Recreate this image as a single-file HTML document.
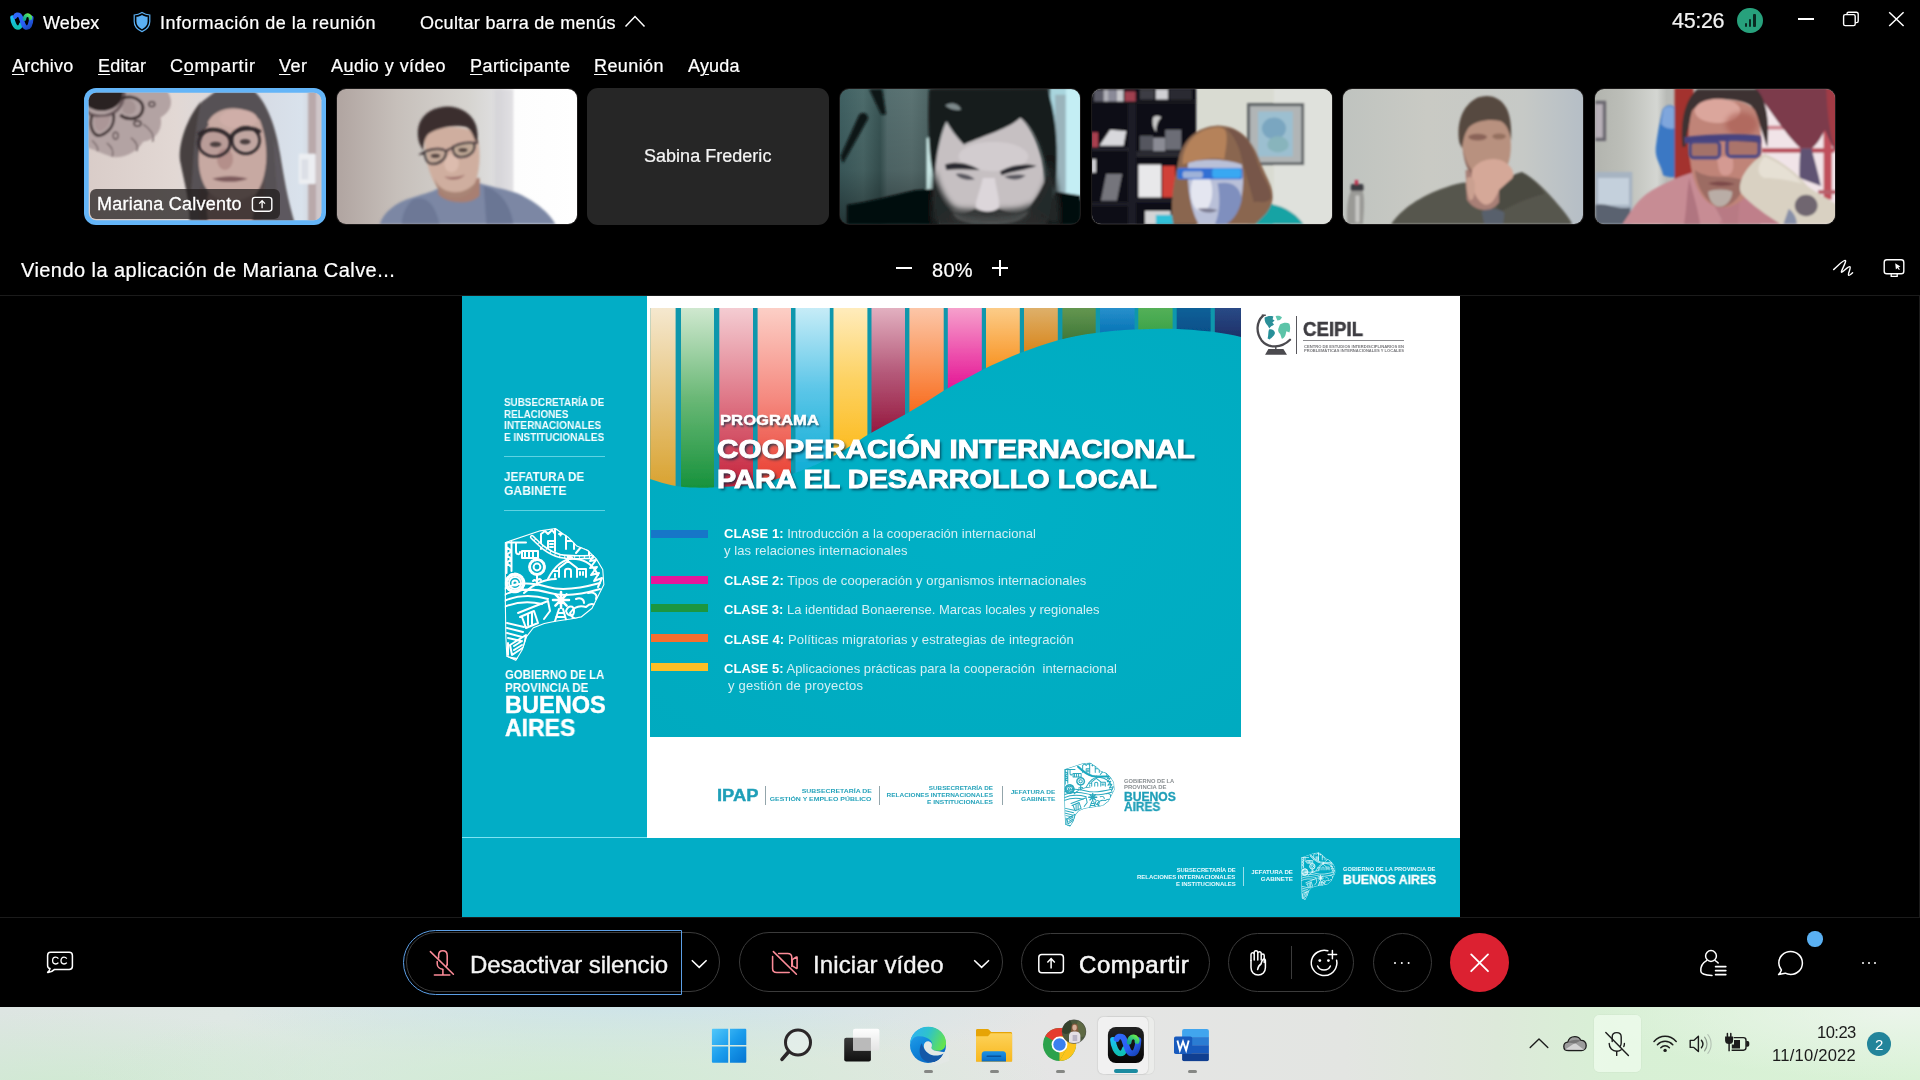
<!DOCTYPE html>
<html><head><meta charset="utf-8"><title>Webex</title>
<style>
*{box-sizing:border-box;margin:0;padding:0}
html,body{width:1920px;height:1080px;overflow:hidden;background:#000}
body{position:relative;font-family:"Liberation Sans",sans-serif;color:#fff}
.a{position:absolute}
.t{position:absolute;white-space:pre;font-family:"Liberation Sans",sans-serif;will-change:transform}
.b{font-weight:bold}
.w{-webkit-text-stroke:.22px}
svg{position:absolute;overflow:visible}
u{text-decoration:underline;text-underline-offset:2px;text-decoration-thickness:1px}
</style></head><body>
<!-- ===== title bar ===== -->
<svg width="0" height="0" style="position:absolute"><defs>
<linearGradient id="wxa" x1="0" y1="0" x2="0" y2="1"><stop offset="0" stop-color="#1cc0f4"></stop><stop offset="1" stop-color="#0fbfb4"></stop></linearGradient>
<linearGradient id="wxb" x1="0" y1="0" x2="1" y2="1"><stop offset="0" stop-color="#2f68fa"></stop><stop offset=".6" stop-color="#2a60f4"></stop><stop offset="1" stop-color="#1644b8"></stop></linearGradient>
<linearGradient id="wxc" x1="0" y1="1" x2="1" y2="0"><stop offset="0" stop-color="#14a494"></stop><stop offset=".5" stop-color="#30c880"></stop><stop offset="1" stop-color="#66ea4e"></stop></linearGradient>
<symbol id="wx" viewBox="140 250 790 570"><g fill="none" stroke-linecap="round">
<path d="M215 410 C225 560 300 745 400 745 C450 745 485 700 505 630" stroke="url(#wxa)" stroke-width="140"></path>
<path d="M305 385 C335 320 405 305 455 345 C535 415 545 745 690 745 C790 745 830 560 838 420" stroke="url(#wxb)" stroke-width="146"></path>
<path d="M612 470 C612 385 665 330 722 336 C782 344 815 400 806 448" stroke="url(#wxc)" stroke-width="118"></path>
</g></symbol></defs></svg>
<svg class="a" style="left:9.6px;top:11.6px" width="24.2" height="18.4"><use href="#wx"></use></svg>
<span class="t w" style="font-size: 18px; line-height: 18px; letter-spacing: 0.149px; left: 42.5px; top: 13.66px;">Webex</span>
<svg class="a" style="left:132px;top:10px" width="20" height="24" viewBox="132 10 20 24">
<path d="M142 12.4 C139.5 14 137 14.8 134.2 15 V21.5 C134.2 26.2 137.4 29.6 142 31.6 C146.6 29.6 149.8 26.2 149.8 21.5 V15 C147 14.8 144.5 14 142 12.4 Z" fill="none" stroke="#5bb0f4" stroke-width="1.2"></path>
<path d="M142 14.9 C140.2 16 138.4 16.6 136.4 16.8 V21.5 C136.4 25 138.6 27.6 142 29.2 C145.4 27.6 147.6 25 147.6 21.5 V16.8 C145.6 16.6 143.8 16 142 14.9 Z" fill="#5bb0f4"></path>
</svg>
<span class="t w" style="font-size: 18px; line-height: 18px; letter-spacing: 0.516px; left: 160px; top: 13.66px;">Información de la reunión</span>
<span class="t w" style="font-size: 18px; line-height: 18px; letter-spacing: 0.305px; left: 420px; top: 13.66px;">Ocultar barra de menús</span>
<svg class="a" style="left:624px;top:14px" width="22" height="14" viewBox="624 14 22 14"><path d="M625.5 26.5 L635 16.6 L644.5 26.5" fill="none" stroke="#fff" stroke-width="1.5"></path></svg>
<span class="t w" style="color: rgb(242, 242, 242); font-size: 21.5px; line-height: 21.5px; letter-spacing: -0.328px; left: 1671.5px; top: 10.7px;">45:26</span>
<div class="a" style="left:1737.2px;top:7.8px;width:25.6px;height:25.6px;border-radius:50%;background:#27a17c"></div>
<div class="a" style="left:1744.6px;top:23px;width:2.2px;height:4.4px;background:#0a2a22;border-radius:1px"></div>
<div class="a" style="left:1749px;top:18.6px;width:2.2px;height:8.8px;background:#0a2a22;border-radius:1px"></div>
<div class="a" style="left:1753.4px;top:13.6px;width:2.2px;height:13.8px;background:#0a2a22;border-radius:1px"></div>
<div class="a" style="left:1798px;top:18px;width:15.6px;height:1.5px;background:#fff"></div>
<svg class="a" style="left:1842px;top:10px" width="18" height="18" viewBox="1842 10 18 18"><rect x="1843.6" y="14.6" width="11.6" height="11" rx="1.6" fill="none" stroke="#fff" stroke-width="1.4"></rect><path d="M1847 14.4 V13.8 C1847 12.8 1847.8 12.2 1848.6 12.2 H1856.2 C1857.4 12.2 1858.2 13 1858.2 14.2 V21 C1858.2 22 1857.4 22.6 1856.6 22.6 H1855.4" fill="none" stroke="#fff" stroke-width="1.4"></path></svg>
<svg class="a" style="left:1888px;top:11px" width="17" height="16" viewBox="1888 11 17 16"><path d="M1889.2 12.2 L1903.6 26 M1903.6 12.2 L1889.2 26" fill="none" stroke="#fff" stroke-width="1.5"></path></svg>
<!-- ===== menu bar ===== -->
<span class="t w" style="font-size: 18px; line-height: 18px; letter-spacing: 0.195px; left: 12.3px; top: 57.36px;"><u>A</u>rchivo</span>
<span class="t w" style="font-size: 18px; line-height: 18px; letter-spacing: 0.194px; left: 98px; top: 57.36px;"><u>E</u>ditar</span>
<span class="t w" style="font-size: 18px; line-height: 18px; letter-spacing: 0.746px; left: 170px; top: 57.36px;">C<u>o</u>mpartir</span>
<span class="t w" style="font-size: 18px; line-height: 18px; letter-spacing: 0.484px; left: 279px; top: 57.36px;"><u>V</u>er</span>
<span class="t w" style="font-size: 18px; line-height: 18px; letter-spacing: 0.451px; left: 331px; top: 57.36px;">A<u>u</u>dio y vídeo</span>
<span class="t w" style="font-size: 18px; line-height: 18px; letter-spacing: 0.447px; left: 470px; top: 57.36px;"><u>P</u>articipante</span>
<span class="t w" style="font-size: 18px; line-height: 18px; letter-spacing: 0.406px; left: 594px; top: 57.36px;"><u>R</u>eunión</span>
<span class="t w" style="font-size: 18px; line-height: 18px; letter-spacing: 0.191px; left: 688px; top: 57.36px;">A<u>y</u>uda</span>
<!-- ===== share toolbar row ===== -->
<span class="t w" style="font-size: 20px; line-height: 20px; letter-spacing: 0.441px; left: 21.3px; top: 260.07px;">Viendo la aplicación de Mariana Calve...</span>
<div class="a" style="left:896px;top:267.2px;width:16px;height:1.5px;background:#fff"></div>
<span class="t w" style="font-size: 20px; line-height: 20px; letter-spacing: 0.284px; left: 931.8px; top: 259.67px;">80%</span>
<div class="a" style="left:992px;top:267.2px;width:16px;height:1.5px;background:#fff"></div>
<div class="a" style="left:999.2px;top:260px;width:1.5px;height:16px;background:#fff"></div>
<svg class="a" style="left:1830px;top:256px" width="26" height="24" viewBox="1830 256 26 24"><path d="M1833.6 269.6 C1838 266 1842.5 260.6 1845 260.4 C1847.6 260.2 1841 270.6 1841.4 272 C1841.9 273.4 1848.6 265.6 1850 266.8 C1851.2 267.9 1847.4 274.4 1848.6 275.2 C1849.6 275.8 1851.4 274 1852.6 272.8" fill="none" stroke="#fff" stroke-width="1.4" stroke-linecap="round" stroke-linejoin="round"></path></svg>
<svg class="a" style="left:1880px;top:256px" width="28" height="24" viewBox="1880 256 28 24"><rect x="1884.2" y="259.8" width="19.6" height="14" rx="2.6" fill="none" stroke="#fff" stroke-width="1.4"></rect><path d="M1891.2 274 V276.4 H1897.2 V274" fill="none" stroke="#fff" stroke-width="1.3"></path><path d="M1895.2 263.2 L1895.9 269.6 L1897.4 268 L1899 270 L1899.9 269.3 L1898.4 267.4 L1900.4 266.6 Z" fill="#fff"></path></svg>
<!-- content frame border -->
<div class="a" style="left:0;top:295px;width:1920px;height:623px;border:1px solid #1b1b1b;border-left:none"></div>
<!-- ===== video tiles ===== -->
<svg width="0" height="0" style="position:absolute"><defs>
<filter id="bl1" x="-20%" y="-25%" width="140%" height="150%"><feGaussianBlur stdDeviation="9"></feGaussianBlur></filter>
<filter id="bl2" x="-10%" y="-10%" width="120%" height="120%"><feGaussianBlur stdDeviation="18"></feGaussianBlur></filter>
<filter id="bl3" x="-20%" y="-20%" width="140%" height="140%"><feGaussianBlur stdDeviation="32"></feGaussianBlur></filter>
</defs></svg>

<!-- tile 1 : Mariana (active speaker) -->
<div class="a" style="left:84px;top:88px;width:242px;height:137px;border-radius:12px;background:#64b5f8"></div>
<svg class="a" style="left:84px;top:88px;border-radius:12px" width="242" height="137" viewBox="0 0 242 137">
<defs><clipPath id="c1"><rect x="4.7" y="4.7" width="232.6" height="127.6" rx="7.5"></rect></clipPath>
<linearGradient id="t1bg" x1="0" x2="1" y1="0" y2="0"><stop offset="0" stop-color="#d9ccc8"></stop><stop offset=".38" stop-color="#e2d8d4"></stop><stop offset=".72" stop-color="#d6dbe4"></stop><stop offset=".9" stop-color="#d9e2ec"></stop><stop offset="1" stop-color="#c9c4c8"></stop></linearGradient></defs>
<g clip-path="url(#c1)"><rect width="242" height="137" fill="url(#t1bg)"></rect>
<g transform="translate(-4,-4) scale(0.13426)"><g filter="url(#bl1)">
 <!-- mandala -->
 <path d="M40 40 H640 C700 120 690 200 600 250 C620 340 560 420 470 430 C420 520 300 560 230 540 C160 520 90 480 40 470 Z" fill="#b3a3a3"></path>
 <path d="M40 40 H330 C330 130 260 200 170 200 C110 200 70 180 40 150 Z" fill="#2b2022"></path>
 <path d="M330 60 C330 170 250 240 150 240 C100 240 70 225 45 200" fill="none" stroke="#6d5c5e" stroke-width="26"></path>
 <path d="M300 110 C420 60 520 160 440 240 C400 270 330 260 300 230" fill="none" stroke="#3b2d2f" stroke-width="22"></path>
 <path d="M90 230 C60 330 110 400 160 380 C230 350 260 290 250 220" fill="none" stroke="#3b2d2f" stroke-width="20"></path>
 <path d="M330 120 C400 100 440 170 400 215 C370 240 330 225 315 200 Z" fill="#a59393"></path>
 <path d="M110 250 C95 320 130 365 160 350 C205 330 225 285 225 240 Z" fill="#ab9697"></path>
 <ellipse cx="428" cy="295" rx="26" ry="20" fill="none" stroke="#4a3a3c" stroke-width="12"></ellipse>
 <ellipse cx="535" cy="150" rx="22" ry="18" fill="none" stroke="#4a3a3c" stroke-width="11"></ellipse>
 <ellipse cx="265" cy="385" rx="18" ry="26" fill="none" stroke="#5a4a4c" stroke-width="10"></ellipse>
 <path d="M470 300 C520 330 560 380 540 430 M380 400 C420 430 440 470 420 500 M200 440 C240 470 250 510 240 540 M90 420 C120 450 140 480 130 500" fill="none" stroke="#6a5a5c" stroke-width="9"></path>
 <!-- right door frame + switch -->
 <rect x="1700" y="40" width="60" height="1000" fill="#b9a9aa"></rect>
 <rect x="1760" y="40" width="70" height="1000" fill="#cfc6c8"></rect>
 <rect x="1630" y="520" width="125" height="225" rx="10" fill="#eceef2"></rect>
 <rect x="1650" y="560" width="50" height="150" fill="#dcdfe6"></rect>
 <!-- hair -->
 <path d="M1010 55 H1300 C1400 150 1460 330 1490 520 C1520 700 1545 860 1600 1040 H815 C820 900 790 780 748 570 C735 440 810 250 910 130 Z" fill="#575154"></path>
 <path d="M900 130 C800 250 730 440 745 570 C770 700 800 800 812 900 C850 700 830 450 900 130 Z" fill="#46403f"></path>
 <path d="M1440 400 C1500 560 1520 800 1590 1040 H1480 C1470 800 1450 600 1440 400 Z" fill="#5d595e"></path>
 <!-- face -->
 <path d="M950 290 C1000 170 1210 130 1340 270 C1400 420 1400 600 1360 720 C1320 840 1240 900 1150 900 C1040 900 920 820 890 640 C870 520 900 400 960 300 Z" fill="#c7a9a2"></path>
 <ellipse cx="1180" cy="260" rx="140" ry="70" fill="#cfaea8"></ellipse>
 <ellipse cx="1080" cy="560" rx="60" ry="80" fill="#b48f8a"></ellipse>
 <path d="M985 705 C1060 680 1180 680 1250 705 C1180 735 1060 738 985 705 Z" fill="#7d5a5c"></path>
 <path d="M900 760 C960 860 1080 930 1200 900 C1290 880 1340 800 1370 700 C1380 850 1360 960 1340 1040 H900 C880 940 880 840 900 760 Z" fill="#5a4c4c"></path>
 <path d="M960 800 C1020 880 1180 900 1290 820 C1300 900 1290 980 1280 1040 H960 C940 960 940 870 960 800 Z" fill="#a98984"></path>
 </g>
 <!-- glasses (sharper) -->
 <g filter="url(#bl1)" fill="none" stroke="#2f2729">
 <ellipse cx="1000" cy="440" rx="118" ry="100" stroke-width="20" fill="rgba(110,90,92,.16)"></ellipse>
 <ellipse cx="1235" cy="420" rx="102" ry="98" stroke-width="20" fill="rgba(150,140,150,.14)"></ellipse>
 <path d="M880 380 C960 320 1060 330 1120 400 C1160 330 1280 310 1345 360" stroke-width="28"></path>
 <ellipse cx="1010" cy="450" rx="42" ry="20" fill="#4a3c3e" stroke="none"></ellipse><ellipse cx="1230" cy="430" rx="40" ry="20" fill="#4a3c3e" stroke="none"></ellipse>
 </g>
</g></g>
</svg>
<div class="a" style="left:90px;top:189.4px;width:190px;height:29.8px;border-radius:6px;background:rgba(34,30,30,.74)"></div>
<span class="t" style="-webkit-text-stroke: 0.3px rgb(255, 255, 255); font-size: 18px; line-height: 18px; letter-spacing: 0.221px; left: 97.3px; top: 195.46px;">Mariana Calvento</span>
<svg class="a" style="left:250px;top:195px" width="24" height="18" viewBox="250 195 24 18"><rect x="252.4" y="197.4" width="19.4" height="13.8" rx="2.6" fill="none" stroke="#fff" stroke-width="1.4"></rect><path d="M262.1 208.2 V200.8 M259.2 203.6 L262.1 200.6 L265 203.6" fill="none" stroke="#fff" stroke-width="1.3"></path></svg>

<!-- tile 2 -->
<svg class="a" style="left:336px;top:88px" width="242" height="137" viewBox="0 0 242 137">
<defs><clipPath id="c2"><rect x="1" y="1" width="240" height="135" rx="9"></rect></clipPath>
<linearGradient id="t2bg" x1="0" x2="1" y1="0" y2="0"><stop offset="0" stop-color="#b0a4a0"></stop><stop offset=".25" stop-color="#c6bfba"></stop><stop offset=".55" stop-color="#d6d4d0"></stop><stop offset=".68" stop-color="#e0e0e2"></stop><stop offset=".74" stop-color="#fdfdfd"></stop><stop offset="1" stop-color="#ffffff"></stop></linearGradient></defs>
<rect width="242" height="137" rx="10" fill="#1c1a1a"></rect>
<g clip-path="url(#c2)"><rect width="242" height="137" fill="url(#t2bg)"></rect>
<g transform="translate(-4,-4) scale(0.13426)"><g filter="url(#bl1)">
 <rect x="1210" y="40" width="140" height="760" fill="#d2d0d6" opacity=".6"></rect>
 <!-- shirt -->
 <path d="M355 1045 C380 960 470 880 600 845 C700 815 760 800 800 770 L1100 740 C1160 760 1280 780 1370 810 C1500 860 1620 960 1665 1045 Z" fill="#7b87a4"></path>
 <path d="M600 860 C700 830 760 880 800 1045 H520 C520 960 560 900 600 860 Z" fill="#6d7896"></path>
 <path d="M1130 760 C1250 790 1330 900 1350 1045 H1150 Z" fill="#6b7694"></path>
 <!-- neck -->
 <path d="M790 700 H1100 V830 C1040 900 860 900 790 820 Z" fill="#a87f72"></path>
 <!-- face -->
 <path d="M690 400 C700 300 1060 290 1085 400 C1110 520 1100 660 1060 750 C1010 840 880 860 810 800 C730 720 690 560 690 400 Z" fill="#cfae9f"></path>
 <ellipse cx="890" cy="590" rx="55" ry="70" fill="#dcbcae"></ellipse>
 <path d="M760 700 C800 820 980 850 1070 730 C1060 800 1000 860 900 850 C820 840 780 790 760 700 Z" fill="#a88474"></path>
 <path d="M835 690 C880 700 950 695 990 675 C960 715 880 725 835 690 Z" fill="#9a6a66"></path>
 <!-- hair -->
 <path d="M650 440 C610 300 680 200 800 175 C920 150 1030 200 1070 300 C1090 360 1085 420 1080 450 C1050 380 1040 340 1000 320 C900 300 780 330 720 370 C690 400 680 440 680 500 Z" fill="#3a2e2e"></path>
 </g>
 <g filter="url(#bl1)" fill="none" stroke="#3a3034" stroke-width="13">
 <path d="M665 520 L700 500 C760 480 820 480 850 500 C850 560 800 600 740 595 C710 590 695 560 690 520 Z" fill="rgba(120,130,110,.15)"></path>
 <path d="M900 470 C950 440 1020 430 1060 440 C1070 500 1030 540 960 545 C920 545 900 520 900 470 Z" fill="rgba(120,140,110,.18)"></path>
 <path d="M850 500 C870 485 885 480 900 475 M1060 440 L1085 432"></path>
 <ellipse cx="770" cy="535" rx="34" ry="14" fill="#4a3a38" stroke="none"></ellipse><ellipse cx="975" cy="492" rx="34" ry="14" fill="#4a3a38" stroke="none"></ellipse>
 </g>
</g></g>
</svg>

<!-- tile 3 : no video -->
<div class="a" style="left:587px;top:88px;width:242px;height:137px;border-radius:11px;background:#262626"></div>
<span class="t w" style="color: rgb(245, 245, 245); font-size: 18px; line-height: 18px; letter-spacing: 0.023px; left: 644.3px; top: 146.56px;">Sabina Frederic</span>

<!-- tile 4 : bearded man -->
<svg class="a" style="left:839px;top:88px" width="242" height="137" viewBox="0 0 242 137">
<defs><clipPath id="c4"><rect x="1" y="1" width="240" height="135" rx="9"></rect></clipPath>
<linearGradient id="t4bg" x1="0" x2="1" y1="0" y2="0"><stop offset="0" stop-color="#3f6062"></stop><stop offset=".1" stop-color="#4d6c6c"></stop><stop offset=".17" stop-color="#3a5656"></stop><stop offset=".2" stop-color="#566f70"></stop><stop offset=".3" stop-color="#5c7474"></stop><stop offset=".37" stop-color="#4f6666"></stop><stop offset=".4" stop-color="#3c4c4c"></stop><stop offset="1" stop-color="#2a3434"></stop></linearGradient>
<linearGradient id="t4v" x1="0" x2="0" y1="0" y2="1"><stop offset="0" stop-color="#000" stop-opacity=".0"></stop><stop offset=".6" stop-color="#000" stop-opacity=".12"></stop><stop offset="1" stop-color="#000" stop-opacity=".45"></stop></linearGradient></defs>
<rect width="242" height="137" rx="10" fill="#1c1a1a"></rect>
<g clip-path="url(#c4)"><rect width="242" height="137" fill="url(#t4bg)"></rect><rect width="100" height="137" fill="url(#t4v)"></rect>
<g transform="translate(-4,-4) scale(0.13426)"><g filter="url(#bl1)">
 <!-- right light strip -->
 <rect x="1600" y="30" width="240" height="830" fill="#a9d5de"></rect>
 <rect x="1640" y="80" width="80" height="760" fill="#9ab4bc"></rect>
 <rect x="1720" y="30" width="120" height="830" fill="#c4eef4"></rect>
 <!-- light sliver left of face -->
 <rect x="680" y="400" width="50" height="400" fill="#c8e6e4"></rect>
 <!-- dark items left -->
 <path d="M255 40 H350 L380 225 L345 230 Z" fill="#0d1616"></path>
 <path d="M40 540 L180 230 C200 205 250 215 245 260 L60 590 Z" fill="#0b1414"></path>
 <!-- shirt -->
 <path d="M90 1045 V900 C250 880 420 830 600 790 L760 780 V1045 Z" fill="#050909"></path>
 <path d="M1640 800 L1830 830 V1045 H1560 Z" fill="#050909"></path>
 <!-- hair -->
 <path d="M700 40 H1580 C1640 200 1660 420 1650 640 L1640 800 C1600 700 1560 520 1520 430 C1470 330 1420 270 1380 250 C1300 330 1120 380 960 450 C900 380 860 320 830 270 C780 360 760 480 740 700 C700 560 690 300 700 40 Z" fill="#141a1a"></path>
 <path d="M820 160 C860 130 920 140 940 190 C900 200 860 190 820 160 Z" fill="#7e8a8c"></path>
 <!-- face -->
 <path d="M830 280 C860 330 900 390 960 450 C1120 380 1300 330 1380 250 C1440 300 1500 400 1540 560 C1580 760 1560 900 1500 1040 H800 C740 900 730 700 760 520 C780 420 800 340 830 280 Z" fill="#c6c0c2"></path>
 <ellipse cx="1180" cy="540" rx="260" ry="110" fill="#d2cccf"></ellipse>
 <!-- brows / eyes -->
 <path d="M820 600 C900 570 1000 590 1080 640 C1000 640 900 630 830 640 Z" fill="#2c2c30"></path>
 <path d="M1230 650 C1320 600 1420 590 1500 610 C1430 640 1320 650 1240 680 Z" fill="#2c2c30"></path>
 <path d="M900 670 C950 660 1010 680 1040 710 C990 720 930 710 900 670 Z" fill="#5a5860"></path>
 <path d="M1260 690 C1310 670 1380 670 1420 680 C1380 720 1310 720 1260 690 Z" fill="#5a5860"></path>
 <!-- beard -->
 <path d="M740 700 C760 800 800 880 860 940 C940 980 1000 960 1040 930 C1080 960 1180 960 1220 930 C1280 960 1400 980 1460 900 C1520 820 1560 740 1600 640 C1640 800 1620 940 1580 1045 H780 C730 940 720 820 740 700 Z" fill="#2b2c2c"></path>
 <path d="M880 960 C1000 1000 1300 1000 1440 950 C1400 1020 1300 1045 1150 1045 C1000 1045 900 1020 880 960 Z" fill="#6e7272"></path>
 <g filter="url(#bl2)"><path d="M745 640 C770 760 820 860 900 930 C860 980 800 1000 770 1045 H720 C700 900 720 760 745 640 Z" fill="#262828" opacity=".9"></path>
 <path d="M1600 560 C1590 700 1540 840 1440 930 C1500 980 1560 1000 1600 1045 H1680 C1690 900 1650 700 1600 560 Z" fill="#262828" opacity=".9"></path>
 <path d="M860 900 C960 960 1040 900 1130 960 C1220 900 1320 960 1460 890 C1440 1000 1400 1045 1150 1045 C900 1045 880 1000 860 900 Z" fill="#3a3c3c" opacity=".85"></path></g>
 <!-- nose -->
 <path d="M1100 700 C1080 800 1040 880 1050 920 C1100 960 1180 960 1220 920 C1230 860 1200 780 1190 700 Z" fill="#dcd6da"></path>
 </g></g></g>
</svg>

<!-- tile 5 : woman w/ bookshelf -->
<svg class="a" style="left:1091px;top:88px" width="242" height="137" viewBox="0 0 242 137">
<defs><clipPath id="c5"><rect x="1" y="1" width="240" height="135" rx="9"></rect></clipPath></defs>
<rect width="242" height="137" rx="10" fill="#1c1a1a"></rect>
<g clip-path="url(#c5)"><rect width="242" height="137" fill="#d9dbd2"></rect>
<g transform="translate(-5,-4) scale(0.13426)"><g filter="url(#bl1)">
 <rect x="1400" y="30" width="450" height="1020" fill="#dfe1dc"></rect>
 <!-- bookshelf -->
 <rect x="30" y="30" width="790" height="1020" fill="#0b0b12"></rect>
 <rect x="310" y="130" width="65" height="920" fill="#1e1e26"></rect>
 <rect x="40" y="110" width="780" height="40" fill="#16161e"></rect>
 <rect x="60" y="45" width="70" height="85" fill="#5a5a66"></rect><rect x="130" y="45" width="40" height="85" fill="#b0b0b8"></rect><rect x="170" y="45" width="60" height="85" fill="#8a8a98"></rect><rect x="230" y="45" width="50" height="85" fill="#c8c8cc"></rect><rect x="290" y="55" width="80" height="75" fill="#a04050"></rect>
 <rect x="400" y="40" width="110" height="75" fill="#3c3c44"></rect><rect x="520" y="40" width="90" height="75" fill="#d0d0d4"></rect><rect x="620" y="40" width="170" height="75" fill="#2a2a32"></rect>
 <path d="M100 460 L180 340 L300 350 L280 460 Z" fill="#d8d8dc"></path><rect x="40" y="360" width="50" height="110" fill="#a84050"></rect>
 <rect x="40" y="470" width="280" height="30" fill="#22222a"></rect>
 <path d="M500 250 C520 230 560 240 560 250 C530 280 520 320 525 360 C500 330 490 290 500 250 Z" fill="#c8c8c8"></path>
 <rect x="400" y="385" width="100" height="110" fill="#55565e"></rect><rect x="500" y="400" width="90" height="100" fill="#8a8b94"></rect><rect x="590" y="340" width="120" height="150" fill="#6c6d76"></rect>
 <rect x="375" y="500" width="445" height="45" fill="#2a2a30"></rect>
 <rect x="390" y="600" width="170" height="245" fill="#e8e8ea"></rect><rect x="568" y="610" width="95" height="235" fill="#d04038"></rect>
 <path d="M150 670 H270 L230 870 H110 Z" fill="#74757c"></path><rect x="40" y="560" width="35" height="100" fill="#d0d0d4"></rect>
 <rect x="40" y="880" width="270" height="30" fill="#1e1e26"></rect><rect x="375" y="850" width="300" height="35" fill="#1e1e26"></rect>
 <rect x="440" y="945" width="190" height="100" fill="#d4d4d6"></rect>
 <rect x="520" y="975" width="140" height="70" fill="#30c0d8"></rect>
 <!-- picture frame -->
 <rect x="1200" y="142" width="425" height="462" fill="#5f6466"></rect>
 <rect x="1222" y="165" width="382" height="418" fill="#b1b5b6"></rect>
 <rect x="1282" y="205" width="258" height="335" fill="#9cbfd0"></rect>
 <ellipse cx="1400" cy="330" rx="90" ry="80" fill="#7aa6c0"></ellipse><ellipse cx="1430" cy="450" rx="80" ry="60" fill="#88b4bc"></ellipse>
 <!-- teal shirt -->
 <path d="M1230 900 C1340 870 1520 900 1620 1045 H1200 Z" fill="#14a3a4"></path>
 <!-- hair -->
 <path d="M650 1045 C620 900 660 700 690 560 C720 420 820 320 980 310 C1140 310 1240 420 1290 560 C1340 700 1400 760 1390 860 C1370 960 1300 1000 1260 1045 Z" fill="#8a6650"></path>
 <path d="M720 560 C740 420 840 330 980 322 C1060 322 1060 380 1030 560 C960 540 820 560 720 600 Z" fill="#b5825a"></path>
 <path d="M1040 330 C1150 330 1230 430 1270 560 C1310 700 1380 760 1380 850 C1340 900 1300 870 1250 880 C1220 760 1180 640 1160 560 C1140 460 1100 380 1040 330 Z" fill="#77574a"></path>
 <!-- face -->
 <path d="M760 590 C860 550 1060 560 1160 600 C1180 720 1170 860 1120 960 C1080 1020 1040 1045 1000 1045 H840 C790 960 750 800 760 590 Z" fill="#b9c0d8"></path>
 <ellipse cx="860" cy="800" rx="80" ry="150" fill="#e4e6f0"></ellipse>
 <path d="M980 740 C1080 720 1150 760 1160 860 C1140 960 1090 1020 1040 1045 H960 C1000 960 1000 840 980 740 Z" fill="#7f8fbe"></path>
 <path d="M830 930 C880 920 940 925 980 940 C940 965 870 965 830 930 Z" fill="#7a7a90"></path>
 <!-- glasses -->
 <rect x="680" y="625" width="485" height="85" rx="20" fill="#3170d4"></rect>
 <rect x="940" y="630" width="215" height="70" rx="16" fill="#37a8f2"></rect>
 <rect x="720" y="650" width="150" height="50" rx="14" fill="#9fb2d8"></rect>
 </g></g></g>
</svg>

<!-- tile 6 : man hand on chin -->
<svg class="a" style="left:1342px;top:88px" width="242" height="137" viewBox="0 0 242 137">
<defs><clipPath id="c6"><rect x="1" y="1" width="240" height="135" rx="9"></rect></clipPath>
<linearGradient id="t6bg" x1="0" x2="1" y1="0" y2="0"><stop offset="0" stop-color="#bfc3bf"></stop><stop offset=".35" stop-color="#c9cac4"></stop><stop offset=".75" stop-color="#c6c9c6"></stop><stop offset="1" stop-color="#b5bec6"></stop></linearGradient></defs>
<rect width="242" height="137" rx="10" fill="#1c1a1a"></rect>
<g clip-path="url(#c6)"><rect width="242" height="137" fill="url(#t6bg)"></rect>
<g transform="translate(-4,-4) scale(0.13426)"><g filter="url(#bl1)">
 <!-- bottle -->
 <path d="M70 1045 C60 950 70 850 95 800 V770 H185 V800 C200 850 195 950 185 1045 Z" fill="#9a9a96"></path>
 <rect x="95" y="745" width="95" height="50" rx="12" fill="#3a3a40"></rect><rect x="125" y="715" width="25" height="35" fill="#c03050"></rect>
 <rect x="130" y="830" width="30" height="200" fill="#c9c9c6"></rect>
 <!-- sweater -->
 <path d="M395 1045 C470 930 620 830 800 770 C880 740 940 730 980 735 L1080 880 L1180 780 C1230 720 1300 670 1370 655 C1460 700 1560 800 1640 900 C1700 970 1730 1010 1745 1045 Z" fill="#57564d"></path>
 <path d="M1180 800 C1240 720 1300 680 1370 660 C1440 700 1500 760 1540 820 C1440 840 1300 900 1200 960 C1170 900 1170 850 1180 800 Z" fill="#4c4b43"></path>
 <path d="M1070 950 C1110 920 1200 920 1240 960 L1230 1045 H1090 Z" fill="#59606c"></path>
 <!-- neck -->
 <path d="M950 640 H1200 V880 C1150 960 1020 960 960 860 Z" fill="#a87f76"></path>
 <!-- face -->
 <path d="M925 330 C940 170 1240 170 1270 330 C1300 440 1290 560 1250 640 C1200 720 1040 730 980 650 C930 570 915 440 925 330 Z" fill="#b8917f"></path>
 <path d="M930 470 C950 600 1000 680 1100 690 C1000 720 940 640 930 470 Z" fill="#8e6a60"></path>
 <ellipse cx="1040" cy="395" rx="70" ry="25" fill="#8a6458"></ellipse><ellipse cx="1200" cy="390" rx="50" ry="22" fill="#94705f"></ellipse>
 <!-- hand -->
 <path d="M1000 640 C1040 570 1140 540 1220 570 C1290 600 1320 660 1300 700 L1200 790 C1170 850 1150 900 1100 900 C1030 880 980 760 1000 640 Z" fill="#d5a898"></path>
 <path d="M960 700 C990 680 1020 700 1020 760 C1020 840 1000 880 980 860 C960 820 950 750 960 700 Z" fill="#caa090"></path>
 <!-- hair -->
 <path d="M905 440 C880 300 920 160 1040 100 C1130 70 1220 100 1260 190 C1290 260 1292 340 1290 420 C1274 350 1258 300 1210 276 C1130 258 1030 272 975 322 C945 360 932 410 925 480 Z" fill="#574a41"></path>
 </g></g></g>
</svg>

<!-- tile 7 : man w/ glasses, curtain -->
<svg class="a" style="left:1594px;top:88px" width="242" height="137" viewBox="0 0 242 137">
<defs><clipPath id="c7"><rect x="1" y="1" width="240" height="135" rx="9"></rect></clipPath>
<linearGradient id="t7bg" x1="0" x2="1" y1="0" y2="0"><stop offset="0" stop-color="#b2b4ae"></stop><stop offset=".12" stop-color="#bcbeb8"></stop><stop offset=".2" stop-color="#c9cbc6"></stop><stop offset=".26" stop-color="#d4d6d2"></stop><stop offset=".3" stop-color="#b8bab6"></stop><stop offset="1" stop-color="#b8bab6"></stop></linearGradient></defs>
<rect width="242" height="137" rx="10" fill="#1c1a1a"></rect>
<g clip-path="url(#c7)"><rect width="242" height="137" fill="url(#t7bg)"></rect>
<g transform="translate(-4,-4) scale(0.13426)"><g filter="url(#bl1)">
 <!-- wall items -->
 <rect x="40" y="125" width="80" height="300" fill="#6a6870"></rect><rect x="40" y="150" width="55" height="250" fill="#b8b0b8"></rect>
 <rect x="40" y="655" width="275" height="400" fill="#a7b4c2"></rect><rect x="60" y="700" width="230" height="200" fill="#c4d0dc"></rect>
 <path d="M40 900 C120 880 200 940 300 920 V1045 H40 Z" fill="#5a6270"></path>
 <!-- window -->
 <rect x="1270" y="30" width="570" height="1020" fill="#f1e4e8"></rect>
 <rect x="1280" y="310" width="540" height="30" fill="#cf8a94"></rect>
 <rect x="1280" y="478" width="540" height="34" fill="#b8505c"></rect>
 <rect x="1740" y="300" width="60" height="560" fill="#c0505c"></rect>
 <rect x="1700" y="790" width="140" height="30" fill="#b8606c"></rect>
 <!-- flag -->
 <path d="M540 190 C570 150 610 150 640 180 V690 C600 700 570 690 545 680 C530 600 480 560 490 470 C500 380 520 280 540 190 Z" fill="#3b78c4"></path>
 <path d="M545 190 C570 160 600 160 630 180 V330 C600 340 560 330 530 300 Z" fill="#7fa6dc"></path>
 <!-- red panel -->
 <rect x="630" y="30" width="140" height="690" fill="#a3302f"></rect>
 <!-- curtain -->
 <path d="M1230 30 H1840 V520 C1800 460 1770 390 1750 340 C1720 400 1690 450 1650 480 H1570 C1480 400 1380 250 1290 130 Z" fill="#7b3a4c"></path>
 <path d="M1760 30 H1840 V520 C1800 440 1770 300 1760 30 Z" fill="#a23a44"></path>
 <path d="M1570 480 H1650 C1670 560 1700 660 1720 760 L1560 700 C1560 620 1560 540 1570 480 Z" fill="#5f5273"></path>
 <!-- shirt -->
 <path d="M240 1045 C300 960 340 880 420 820 C520 750 660 690 790 650 L1000 1045 Z" fill="#c78c94"></path>
 <path d="M960 1045 L1100 820 C1200 860 1340 940 1430 1045 Z" fill="#bf7f8a"></path>
 <path d="M790 660 L1000 1045 H1100 L1120 800 Z" fill="#b87a84"></path>
 <path d="M740 700 C760 800 800 900 820 1045 H700 C720 940 720 800 740 700 Z" fill="#b07480"></path>
 <!-- hair -->
 <path d="M690 470 C670 300 700 120 800 40 H1240 C1320 120 1340 300 1320 470 C1290 400 1260 250 1200 160 C1100 100 900 100 800 170 C740 250 720 380 710 470 Z" fill="#3c3030"></path>
 <!-- face -->
 <path d="M760 200 C840 90 1160 90 1230 200 C1290 330 1290 560 1250 700 C1200 840 1080 930 960 920 C860 900 790 800 760 660 C730 500 720 330 760 200 Z" fill="#c08478"></path>
 <ellipse cx="950" cy="200" rx="170" ry="90" fill="#dba69c"></ellipse>
 <ellipse cx="1130" cy="300" rx="120" ry="90" fill="#a5554c" opacity=".55" filter="url(#bl2)"></ellipse>
 <path d="M940 540 C960 600 950 660 990 680 C1060 690 1080 640 1060 540 Z" fill="#d49a92"></path>
 <path d="M780 640 C800 780 860 880 960 920 C1070 910 1130 830 1160 720 C1100 700 1040 690 960 690 C880 690 820 670 780 640 Z" fill="#9c6c64"></path>
 <path d="M880 800 C920 780 1020 780 1060 800 C1060 860 1020 910 960 915 C910 905 885 860 880 800 Z" fill="#b9ada6"></path>
 <path d="M880 740 C940 720 1020 720 1080 745 C1020 765 930 765 880 740 Z" fill="#7c4a48"></path>
 <!-- white object -->
 <path d="M1125 720 C1150 640 1230 560 1300 520 C1400 560 1520 640 1620 760 C1700 820 1780 860 1840 900 V1045 H1420 C1320 980 1200 900 1130 820 C1110 790 1115 750 1125 720 Z" fill="#d9d1c2"></path>
 <path d="M1300 540 C1400 580 1500 650 1580 740 C1500 720 1400 700 1300 700 C1240 680 1240 600 1300 540 Z" fill="#e6e0d4"></path>
 <ellipse cx="1610" cy="905" rx="85" ry="80" fill="#6f6670"></ellipse>
 <path d="M1480 930 C1520 960 1540 1000 1540 1045 H1440 Z" fill="#8890a8"></path>
 </g>
 <g filter="url(#bl1)">
 <path d="M700 395 C860 375 1100 365 1270 385 L1275 440 C1100 415 860 425 705 445 Z" fill="#46437e"></path>
 <rect x="745" y="430" width="220" height="120" rx="30" fill="rgba(90,70,70,.28)" stroke="#494684" stroke-width="22"></rect>
 <rect x="1020" y="410" width="240" height="130" rx="32" fill="rgba(110,70,70,.26)" stroke="#494684" stroke-width="22"></rect>
 </g>
</g></g>
</svg>
<!-- ===== shared slide ===== -->
<div class="a" style="left:461.7px;top:296px;width:998px;height:620.8px;background:#fff;overflow:hidden" id="slide">
</div>
<!-- sidebar + bottom band -->
<div class="a" style="left:461.7px;top:296px;width:185.2px;height:542px;background:#02adc6"></div>
<div class="a" style="left:461.7px;top:836.6px;width:185.2px;height:1.4px;background:#7fe3f2"></div>
<div class="a" style="left:461.7px;top:838px;width:998px;height:78.8px;background:#02adc6"></div>
<!-- main teal panel with bars -->
<svg class="a" style="left:650px;top:308px" width="591" height="429" viewBox="650 308 591 429">
<defs>
<filter id="sb" x="-2%" y="-2%" width="104%" height="104%"><feGaussianBlur stdDeviation="0.7"></feGaussianBlur></filter>
<linearGradient id="g1" x1="0" x2="0" y1="308" y2="486" gradientUnits="userSpaceOnUse"><stop offset="0" stop-color="#f5e8cf"></stop><stop offset="1" stop-color="#d9a331"></stop></linearGradient>
<linearGradient id="g2" x1="0" x2="0" y1="308" y2="488" gradientUnits="userSpaceOnUse"><stop offset="0" stop-color="#cfe8cf"></stop><stop offset=".5" stop-color="#6ab876"></stop><stop offset="1" stop-color="#17923c"></stop></linearGradient>
<linearGradient id="g3" x1="0" x2="0" y1="308" y2="488" gradientUnits="userSpaceOnUse"><stop offset="0" stop-color="#f4ccd2"></stop><stop offset=".5" stop-color="#df7888"></stop><stop offset="1" stop-color="#c4203a"></stop></linearGradient>
<linearGradient id="g4" x1="0" x2="0" y1="308" y2="488" gradientUnits="userSpaceOnUse"><stop offset="0" stop-color="#fccfc6"></stop><stop offset=".5" stop-color="#f58a80"></stop><stop offset="1" stop-color="#e8382a"></stop></linearGradient>
<linearGradient id="g5" x1="0" x2="0" y1="308" y2="470" gradientUnits="userSpaceOnUse"><stop offset="0" stop-color="#c6ecf7"></stop><stop offset=".5" stop-color="#5cc6e8"></stop><stop offset="1" stop-color="#12aed6"></stop></linearGradient>
<linearGradient id="g6" x1="0" x2="0" y1="308" y2="450" gradientUnits="userSpaceOnUse"><stop offset="0" stop-color="#ffecbc"></stop><stop offset=".5" stop-color="#fdd263"></stop><stop offset="1" stop-color="#fcbc22"></stop></linearGradient>
<linearGradient id="g7" x1="0" x2="0" y1="308" y2="436" gradientUnits="userSpaceOnUse"><stop offset="0" stop-color="#e2b0c0"></stop><stop offset=".5" stop-color="#b55a7a"></stop><stop offset="1" stop-color="#94153c"></stop></linearGradient>
<linearGradient id="g8" x1="0" x2="0" y1="308" y2="414" gradientUnits="userSpaceOnUse"><stop offset="0" stop-color="#fcc6a8"></stop><stop offset=".5" stop-color="#fa9a60"></stop><stop offset="1" stop-color="#f86a1c"></stop></linearGradient>
<linearGradient id="g9" x1="0" x2="0" y1="308" y2="390" gradientUnits="userSpaceOnUse"><stop offset="0" stop-color="#f6a0cc"></stop><stop offset=".5" stop-color="#ee58b0"></stop><stop offset="1" stop-color="#e41494"></stop></linearGradient>
<linearGradient id="g10" x1="0" x2="0" y1="308" y2="368" gradientUnits="userSpaceOnUse"><stop offset="0" stop-color="#fccc88"></stop><stop offset="1" stop-color="#f89424"></stop></linearGradient>
<linearGradient id="g11" x1="0" x2="0" y1="308" y2="352" gradientUnits="userSpaceOnUse"><stop offset="0" stop-color="#deb06a"></stop><stop offset="1" stop-color="#d8861c"></stop></linearGradient>
<linearGradient id="g12" x1="0" x2="0" y1="308" y2="340" gradientUnits="userSpaceOnUse"><stop offset="0" stop-color="#649650"></stop><stop offset="1" stop-color="#3f7838"></stop></linearGradient>
<linearGradient id="g13" x1="0" x2="0" y1="308" y2="333" gradientUnits="userSpaceOnUse"><stop offset="0" stop-color="#2890cc"></stop><stop offset="1" stop-color="#0674b6"></stop></linearGradient>
<linearGradient id="g14" x1="0" x2="0" y1="308" y2="330" gradientUnits="userSpaceOnUse"><stop offset="0" stop-color="#54b058"></stop><stop offset="1" stop-color="#3ea44a"></stop></linearGradient>
<linearGradient id="g15" x1="0" x2="0" y1="308" y2="332" gradientUnits="userSpaceOnUse"><stop offset="0" stop-color="#0c6098"></stop><stop offset="1" stop-color="#06508a"></stop></linearGradient>
<linearGradient id="g16" x1="0" x2="0" y1="308" y2="338" gradientUnits="userSpaceOnUse"><stop offset="0" stop-color="#2a4a86"></stop><stop offset="1" stop-color="#1c3068"></stop></linearGradient>
<radialGradient id="pv" cx=".55" cy=".45" r=".8"><stop offset="0" stop-color="#04b0c6"></stop><stop offset="1" stop-color="#02aabf"></stop></radialGradient>
<clipPath id="pc"><rect x="650" y="308" width="591" height="429"></rect></clipPath>
</defs>
<g clip-path="url(#pc)">
<rect x="650" y="308" width="591" height="429" fill="#0e97ac"></rect>
<g filter="url(#sb)">
<rect x="650.2" y="308" width="25.4" height="200" fill="url(#g1)"></rect>
<rect x="681" y="308" width="33" height="200" fill="url(#g2)"></rect>
<rect x="719.3" y="308" width="33.7" height="200" fill="url(#g3)"></rect>
<rect x="757.6" y="308" width="33.4" height="200" fill="url(#g4)"></rect>
<rect x="795.5" y="308" width="34.3" height="200" fill="url(#g5)"></rect>
<rect x="833.5" y="308" width="33.9" height="200" fill="url(#g6)"></rect>
<rect x="871.5" y="308" width="33.5" height="200" fill="url(#g7)"></rect>
<rect x="909.4" y="308" width="34.3" height="200" fill="url(#g8)"></rect>
<rect x="947.8" y="308" width="34" height="200" fill="url(#g9)"></rect>
<rect x="986" y="308" width="33.8" height="200" fill="url(#g10)"></rect>
<rect x="1024" y="308" width="33.8" height="200" fill="url(#g11)"></rect>
<rect x="1062.4" y="308" width="33.3" height="200" fill="url(#g12)"></rect>
<rect x="1100" y="308" width="34.6" height="200" fill="url(#g13)"></rect>
<rect x="1138.3" y="308" width="34.3" height="200" fill="url(#g14)"></rect>
<rect x="1176.7" y="308" width="33.9" height="200" fill="url(#g15)"></rect>
<rect x="1214.8" y="308" width="27" height="200" fill="url(#g16)"></rect>
<!-- teal foreground with curved top -->
<path d="M648 478.5 C660 482 672 486.5 690 487.6 C706 488 716 487.4 719 487 C735 486.6 746 485.6 757 484 C772 481 784 477 795 473 C810 467.5 822 462 833.5 456 C846 449.5 858 441 867.4 435 C880 428 893 421 905 414.5 C918 407 931 399 944 390.5 C957 383 970 376.5 982 370 C995 363.5 1008 358 1020 353 C1033 348 1046 343.6 1058 340.2 C1070 337 1083 334.6 1095.7 333 C1108 331.2 1121 330.2 1134.6 329.6 C1147 329 1160 328.6 1172.6 328.7 C1185 329.2 1198 330.2 1210.6 331.6 C1222 333 1232 335 1243 337.4 V740 H648 Z" fill="url(#pv)"></path>
</g>
</g>
</svg>
<!-- slide title text -->
<span class="t b" style="text-shadow: rgba(0, 50, 70, 0.75) 1.2px 1.6px 2px; -webkit-text-stroke: 0.5px rgb(255, 255, 255); font-size: 14.8px; line-height: 14.8px; letter-spacing: 0px; transform: scaleX(1.1254); transform-origin: 0px 50%; left: 719.6px; top: 412.67px;">PROGRAMA</span>
<span class="t b" style="text-shadow: rgba(0, 45, 65, 0.8) 1.6px 2.2px 2.6px; -webkit-text-stroke: 0.9px rgb(255, 255, 255); font-size: 25.6px; line-height: 25.6px; letter-spacing: 0px; transform: scaleX(1.1592); transform-origin: 0px 50%; left: 716.9px; top: 436.83px;">COOPERACIÓN INTERNACIONAL</span>
<span class="t b" style="text-shadow: rgba(0, 45, 65, 0.8) 1.6px 2.2px 2.6px; -webkit-text-stroke: 0.9px rgb(255, 255, 255); font-size: 25.6px; line-height: 25.6px; letter-spacing: 0px; transform: scaleX(1.1266); transform-origin: 0px 50%; left: 716.9px; top: 467.43px;">PARA EL DESARROLLO LOCAL</span>
<!-- class list -->
<div class="a" style="left:651px;top:530px;width:56.6px;height:7.6px;background:#1676c8"></div>
<div class="a" style="left:651px;top:576px;width:56.6px;height:8px;background:#e6169a"></div>
<div class="a" style="left:651px;top:604.4px;width:56.6px;height:8px;background:#1c9640"></div>
<div class="a" style="left:651px;top:633.5px;width:56.6px;height:8px;background:#f66e2e"></div>
<div class="a" style="left:651px;top:662.8px;width:56.6px;height:8.2px;background:#fcbe26"></div>
<span class="t" style="color: rgb(212, 240, 245); font-size: 13px; line-height: 13px; letter-spacing: 0.037px; left: 724.4px; top: 527.3px;"><b style="color:#fff">CLASE 1:</b> Introducción a la cooperación internacional</span>
<span class="t" style="color: rgb(212, 240, 245); font-size: 13px; line-height: 13px; letter-spacing: 0.095px; left: 724.4px; top: 544.2px;">y las relaciones internacionales</span>
<span class="t" style="color: rgb(212, 240, 245); font-size: 13px; line-height: 13px; letter-spacing: 0.068px; left: 724.4px; top: 573.8px;"><b style="color:#fff">CLASE 2:</b> Tipos de cooperación y organismos internacionales</span>
<span class="t" style="color: rgb(212, 240, 245); font-size: 13px; line-height: 13px; letter-spacing: 0.009px; left: 724.4px; top: 603.2px;"><b style="color:#fff">CLASE 3:</b> La identidad Bonaerense. Marcas locales y regionales</span>
<span class="t" style="color: rgb(212, 240, 245); font-size: 13px; line-height: 13px; letter-spacing: 0.126px; left: 724.4px; top: 632.5px;"><b style="color:#fff">CLASE 4:</b> Políticas migratorias y estrategias de integración</span>
<span class="t" style="color: rgb(212, 240, 245); font-size: 13px; line-height: 13px; letter-spacing: 0.051px; left: 724.4px; top: 661.9px;"><b style="color:#fff">CLASE 5:</b> Aplicaciones prácticas para la cooperación  internacional</span>
<span class="t" style="color: rgb(212, 240, 245); font-size: 13px; line-height: 13px; letter-spacing: 0.234px; left: 728px; top: 678.8px;">y gestión de proyectos</span>
<!-- sidebar text -->
<span class="t b" style="color: rgb(244, 253, 255); font-size: 10.6px; line-height: 10.6px; letter-spacing: 0px; transform: scaleX(0.9302); transform-origin: 0px 50%; left: 503.7px; top: 396.73px;">SUBSECRETARÍA DE</span>
<span class="t b" style="color: rgb(244, 253, 255); font-size: 10.6px; line-height: 10.6px; letter-spacing: 0px; transform: scaleX(0.9256); transform-origin: 0px 50%; left: 503.7px; top: 408.53px;">RELACIONES</span>
<span class="t b" style="color: rgb(244, 253, 255); font-size: 10.6px; line-height: 10.6px; letter-spacing: 0px; transform: scaleX(0.9545); transform-origin: 0px 50%; left: 503.7px; top: 420.33px;">INTERNACIONALES</span>
<span class="t b" style="color: rgb(244, 253, 255); font-size: 10.6px; line-height: 10.6px; letter-spacing: 0px; transform: scaleX(0.9457); transform-origin: 0px 50%; left: 503.7px; top: 432.13px;">E INSTITUCIONALES</span>
<div class="a" style="left:504px;top:456.3px;width:100.6px;height:1.2px;background:#5fd2e2"></div>
<span class="t b" style="color: rgb(244, 253, 255); font-size: 13.6px; line-height: 13.6px; letter-spacing: 0px; transform: scaleX(0.8643); transform-origin: 0px 50%; left: 504px; top: 469.69px;">JEFATURA DE</span>
<span class="t b" style="color: rgb(244, 253, 255); font-size: 13.6px; line-height: 13.6px; letter-spacing: 0px; transform: scaleX(0.8897); transform-origin: 0px 50%; left: 504px; top: 483.89px;">GABINETE</span>
<div class="a" style="left:504px;top:510.2px;width:100.6px;height:1.2px;background:#5fd2e2"></div>
<span class="t b" style="font-size: 12.6px; line-height: 12.6px; letter-spacing: 0px; transform: scaleX(0.9039); transform-origin: 0px 50%; left: 504.6px; top: 669.43px;">GOBIERNO DE LA</span>
<span class="t b" style="font-size: 12.6px; line-height: 12.6px; letter-spacing: 0px; transform: scaleX(0.9215); transform-origin: 0px 50%; left: 504.6px; top: 682.13px;">PROVINCIA DE</span>
<span class="t b" style="-webkit-text-stroke: 0.4px rgb(255, 255, 255); font-size: 23.2px; line-height: 23.2px; letter-spacing: 0px; transform: scaleX(1.0149); transform-origin: 0px 50%; left: 504.6px; top: 694.46px;">BUENOS</span>
<span class="t b" style="-webkit-text-stroke: 0.4px rgb(255, 255, 255); font-size: 23.2px; line-height: 23.2px; letter-spacing: 0px; transform: scaleX(0.9905); transform-origin: 0px 50%; left: 504.6px; top: 716.76px;">AIRES</span>
<!-- province map logo symbol -->
<svg width="0" height="0" style="position:absolute"><defs>
<clipPath id="provclip"><path d="M0.8 15.2 L36 3.3 L51.4 1 L64.4 9.8 L73 18.5 L84 22.9 L92.8 31.6 L99.3 42.5 L100.4 57.7 L95 68.6 L88.4 81.7 L77.5 90.4 L66.6 92.6 L51.4 94.8 L40.5 97 L29.6 101.3 L23 110 L18.7 123 L12 134 L2.3 129.6 L1.3 110 L0.8 75 Z"></path></clipPath>
<symbol id="prov" viewBox="0 0 101 135">
<g clip-path="url(#provclip)" fill="none" stroke="currentColor" stroke-width="2" stroke-linejoin="round" stroke-linecap="round">
<path d="M0.8 15.2 L36 3.3 L51.4 1 L64.4 9.8 L73 18.5 L84 22.9 L92.8 31.6 L99.3 42.5 L100.4 57.7 L95 68.6 L88.4 81.7 L77.5 90.4 L66.6 92.6 L51.4 94.8 L40.5 97 L29.6 101.3 L23 110 L18.7 123 L12 134 L2.3 129.6 L1.3 110 L0.8 75 Z" stroke-width="2.2"></path>
<!-- crane -->
<path d="M2.5 16 V46 M7.5 15 V44 M2.5 20 L7.5 24 L2.5 28 L7.5 32 L2.5 36 L7.5 40 M2 15.5 H22 M12 15.5 V24 C12 28 16 28 16 25"></path>
<!-- buildings -->
<path d="M37 22 V7 L41 4 L44 7 L48 3 L51 7 V2 M51 22 V2 H62 V22 M55 7 H58 M56.5 5.5 V8.5 M44 14 H51 V24 M44 14 V22 M46 17 H49 M46 20 H49 M62 14 H70 V22 M72 26 L78 19 L85 24 V30"></path>
<!-- road -->
<path d="M28 10 C36 18 44 26 56 29 C66 31 76 30 88 30" stroke-width="4.4"></path>
<path d="M28 10 C36 18 44 26 56 29 C66 31 76 30 88 30" stroke="#02adc6" stroke-width="1.4" stroke-dasharray="3 2" class="rd"></path>
<!-- truck / bus -->
<path d="M18 24 H34 V31 H18 Z M21 24 V31 M25 24 V31 M29 24 V31"></path>
<!-- sunflower -->
<circle cx="33" cy="40" r="3.4"></circle><circle cx="33" cy="40" r="7.4" stroke-width="3" stroke-dasharray="1.7 1.5"></circle>
<path d="M33 48 V58 M29 54 C31 52 33 54 33 56 M37 53 C35 51 33 53 33 55"></path>
<!-- gear -->
<circle cx="11" cy="56" r="2.6"></circle><circle cx="11" cy="56" r="8.6" stroke-width="3.6" stroke-dasharray="2.6 2.4"></circle><circle cx="11" cy="56" r="6"></circle>
<!-- house/school -->
<path d="M55 50 V41 L64 34 L73 41 V50 M61 50 V44 C61 41 67 41 67 44 V50 M73 42 H82 V50 M76 45 V48 M79 45 V48 M49 44 H55 M51 47 V50 M64 34 V29 L68 30.5 L64 32"></path>
<path d="M44 52 C50 40 60 30 72 32 C84 33 90 40 94 48"></path>
<!-- grass -->
<path d="M90 28 L86 34 L92 33 L86 41 L93 40 L87 48 L95 46 L90 54 L98 51 L94 60"></path>
<!-- fields -->
<path d="M0 62 C14 54 30 56 44 60 C58 64 74 62 96 56 M0 68 C16 60 32 62 46 66 C60 70 76 68 96 62 M0 74 C16 67 30 68 44 72 M0 80 C14 74 26 74 38 77 M20 66 C28 58 40 52 52 52"></path>
<!-- windmill -->
<circle cx="57" cy="73" r="2"></circle><path d="M57 65 V81 M49 73 H65 M51.4 67.4 L62.6 78.6 M62.6 67.4 L51.4 78.6" stroke-width="2.6"></path><path d="M55 82 L50 97 M59 82 L63 96 M52 90 H61 M53.5 86 H60"></path>
<!-- barn / boat -->
<path d="M14 86 L44 74 M16 90 L30 84 M30 84 L34 96 L22 101 L18 90 M24 88 V98 M28 86.5 V97 M44 74 L46 84 L40 92"></path>
<!-- cow -->
<path d="M66 86 C70 80 76 78 82 80 C86 76 90 76 92 80 C96 80 96 84 92 86 C90 90 84 92 78 92 C74 94 68 92 66 86 Z M72 72 C76 70 80 72 80 76 M84 66 C90 64 94 68 92 72"></path>
<path d="M62 84 C64 78 70 78 70 84 C70 90 64 90 62 84 Z"></path>
<!-- tail: book + stripes -->
<path d="M3 96 L20 100 M3 101 L19 105 M3 106 L18 110 M4 111 L17 114 M6 118 L22 108 L20 120 L8 128 Z M10 119 L18 114 M10 123 L18 118 M4 116 V128 M3 130 L14 132"></path>
</g></symbol>
</defs></svg>
<svg class="a" style="left:504px;top:527px;color:#fff" width="101" height="135"><use href="#prov"></use></svg>
<!-- CEIPIL logo -->
<svg class="a" style="left:1254px;top:312px" width="46" height="46" viewBox="1254 312 46 46">
<path d="M1262.9 315.8 C1256.5 321.5 1255.6 332.5 1261.6 340.4 C1268.4 348.6 1281.6 348.4 1290 339.8" fill="none" stroke="#4b4a4f" stroke-width="2.3" stroke-linecap="round"></path>
<path d="M1261.8 315.4 L1265.8 315.2" stroke="#4b4a4f" stroke-width="1.6"></path>
<path d="M1275.8 346.8 V350 M1268.8 349.8 H1283 L1285.7 354 H1266.3 Z" fill="#4b4a4f" stroke="#4b4a4f" stroke-width="1.4"></path>
<path d="M1264.6 317.6 C1267 316 1270.4 315.6 1273.4 316.4 L1272.6 319.2 L1274.6 320.4 L1272.4 322.4 L1274 324.6 C1272 326.4 1270.2 326.2 1269.4 328.6 L1267.6 325.6 C1265.6 323.8 1264.4 321 1264.6 317.6 Z" fill="#2b8f98"></path>
<path d="M1269 329.6 C1271.6 328.6 1274.6 330.6 1275 333 C1274.4 336 1271.4 337.4 1269.8 339.6 L1267.6 338.4 C1268.6 335.4 1268 332 1269 329.6 Z" fill="#279099"></path>
<path d="M1275.6 316.2 C1278 315.2 1280.6 315.8 1282 317.4 L1280 320 L1277.4 320.6 Z" fill="#5fc6ae"></path>
<path d="M1280 324.6 C1283 322.6 1287 322.2 1289.4 323.8 C1290.4 326.8 1290.4 330 1289.4 332.6 L1286.4 331.2 L1285.4 335.2 C1284.4 337.4 1283 339 1281.8 338.8 L1280.2 334 C1278.2 332.6 1277.8 330.4 1278.4 328.6 Z" fill="#5cc4a8"></path>
</svg>
<div class="a" style="left:1296.2px;top:316px;width:1.3px;height:38.2px;background:#58575c"></div>
<span class="t b" style="color: rgb(62, 61, 66); -webkit-text-stroke: 0.5px rgb(62, 61, 66); font-size: 19.4px; line-height: 19.4px; letter-spacing: 0px; transform: scaleX(0.96); transform-origin: 0px 50%; left: 1302.9px; top: 319.68px;">CEIPIL</span>
<div class="a" style="left:1302.9px;top:340px;width:101px;height:.9px;background:#8a8a8e"></div>
<span class="t b" style="color: rgb(118, 118, 122); font-size: 4px; line-height: 4px; letter-spacing: 0px; transform: scaleX(1.0273); transform-origin: 0px 50%; left: 1303.7px; top: 344.71px;">CENTRO DE ESTUDIOS INTERDISCIPLINARIOS EN</span>
<span class="t b" style="color: rgb(118, 118, 122); font-size: 4px; line-height: 4px; letter-spacing: 0px; transform: scaleX(1.0172); transform-origin: 0px 50%; left: 1303.7px; top: 349.41px;">PROBLEMÁTICAS INTERNACIONALES Y LOCALES</span>
<!-- bottom logo row (white zone) -->
<span class="t b" style="color: rgb(31, 159, 184); -webkit-text-stroke: 0.4px rgb(31, 159, 184); font-size: 17.2px; line-height: 17.2px; letter-spacing: 0px; transform: scaleX(1.0684); transform-origin: 0px 50%; left: 717px; top: 787.04px;">IPAP</span>
<div class="a" style="left:764.8px;top:786px;width:1px;height:18.6px;background:#93a5ab"></div>
<span class="t b" style="color: rgb(37, 163, 187); font-size: 5.9px; line-height: 5.9px; letter-spacing: 0px; transform: scaleX(1.1718); transform-origin: 100% 50%; left: 811.79px; top: 789.21px;">SUBSECRETARÍA DE</span>
<span class="t b" style="color: rgb(37, 163, 187); font-size: 5.9px; line-height: 5.9px; letter-spacing: 0px; transform: scaleX(1.1776); transform-origin: 100% 50%; left: 785.17px; top: 796.61px;">GESTIÓN Y EMPLEO PÚBLICO</span>
<div class="a" style="left:878.9px;top:786px;width:1px;height:18.6px;background:#93a5ab"></div>
<span class="t b" style="color: rgb(37, 163, 187); font-size: 5.6px; line-height: 5.6px; letter-spacing: 0px; transform: scaleX(1.1253); transform-origin: 100% 50%; left: 936.42px; top: 786.46px;">SUBSECRETARÍA DE</span>
<span class="t b" style="color: rgb(37, 163, 187); font-size: 5.6px; line-height: 5.6px; letter-spacing: 0px; transform: scaleX(1.1576); transform-origin: 100% 50%; left: 901.3px; top: 793.46px;">RELACIONES INTERNACIONALES</span>
<span class="t b" style="color: rgb(37, 163, 187); font-size: 5.6px; line-height: 5.6px; letter-spacing: 0px; transform: scaleX(1.1796); transform-origin: 100% 50%; left: 937.35px; top: 800.46px;">E INSTITUCIONALES</span>
<div class="a" style="left:1001.7px;top:786px;width:1px;height:18.6px;background:#93a5ab"></div>
<span class="t b" style="color: rgb(37, 163, 187); font-size: 5.9px; line-height: 5.9px; letter-spacing: 0px; transform: scaleX(1.1076); transform-origin: 100% 50%; left: 1015.33px; top: 789.81px;">JEFATURA DE</span>
<span class="t b" style="color: rgb(37, 163, 187); font-size: 5.9px; line-height: 5.9px; letter-spacing: 0px; transform: scaleX(1.1302); transform-origin: 100% 50%; left: 1025.16px; top: 796.61px;">GABINETE</span>
<svg class="a" style="left:1063.9px;top:762.4px;color:#2aa9be" width="50.9" height="65.2" viewBox="0 0 101 135" preserveAspectRatio="none"><use href="#prov"></use></svg>
<span class="t b" style="color: rgb(138, 143, 146); font-size: 5px; line-height: 5px; letter-spacing: 0px; transform: scaleX(1.153); transform-origin: 0px 50%; left: 1123.7px; top: 778.97px;">GOBIERNO DE LA</span>
<span class="t b" style="color: rgb(138, 143, 146); font-size: 5px; line-height: 5px; letter-spacing: 0px; transform: scaleX(1.1826); transform-origin: 0px 50%; left: 1123.7px; top: 784.97px;">PROVINCIA DE</span>
<span class="t b" style="color: rgb(31, 159, 184); -webkit-text-stroke: 0.3px rgb(31, 159, 184); font-size: 12px; line-height: 12px; letter-spacing: 0px; transform: scaleX(1.0108); transform-origin: 0px 50%; left: 1123.7px; top: 790.84px;">BUENOS</span>
<span class="t b" style="color: rgb(31, 159, 184); -webkit-text-stroke: 0.3px rgb(31, 159, 184); font-size: 12px; line-height: 12px; letter-spacing: 0px; transform: scaleX(0.9867); transform-origin: 0px 50%; left: 1123.7px; top: 801.04px;">AIRES</span>
<!-- bottom band logos (white on teal) -->
<span class="t b" style="color: rgb(234, 250, 255); font-size: 5.2px; line-height: 5.2px; letter-spacing: 0px; transform: scaleX(1.1185); transform-origin: 100% 50%; left: 1182.65px; top: 867.7px;">SUBSECRETARÍA DE</span>
<span class="t b" style="color: rgb(234, 250, 255); font-size: 5.2px; line-height: 5.2px; letter-spacing: 0px; transform: scaleX(1.1534); transform-origin: 100% 50%; left: 1150.09px; top: 874.7px;">RELACIONES INTERNACIONALES</span>
<span class="t b" style="color: rgb(234, 250, 255); font-size: 5.2px; line-height: 5.2px; letter-spacing: 0px; transform: scaleX(1.1563); transform-origin: 100% 50%; left: 1183.51px; top: 881.7px;">E INSTITUCIONALES</span>
<div class="a" style="left:1243.3px;top:866.7px;width:1px;height:19.4px;background:#9adfea"></div>
<span class="t b" style="color: rgb(234, 250, 255); font-size: 5.4px; line-height: 5.4px; letter-spacing: 0px; transform: scaleX(1.1264); transform-origin: 100% 50%; left: 1256.36px; top: 870.23px;">JEFATURA DE</span>
<span class="t b" style="color: rgb(234, 250, 255); font-size: 5.4px; line-height: 5.4px; letter-spacing: 0px; transform: scaleX(1.1486); transform-origin: 100% 50%; left: 1265.34px; top: 877.03px;">GABINETE</span>
<svg class="a" style="left:1300.9px;top:852.4px;color:#e6f9fc" width="34.7" height="48.3" viewBox="0 0 101 135" preserveAspectRatio="none"><use href="#prov"></use></svg>
<span class="t b" style="color: rgb(234, 250, 255); font-size: 5.6px; line-height: 5.6px; letter-spacing: 0px; transform: scaleX(1.0228); transform-origin: 0px 50%; left: 1343px; top: 867.36px;">GOBIERNO DE LA PROVINCIA DE</span>
<span class="t b" style="color: rgb(255, 255, 255); -webkit-text-stroke: 0.3px rgb(255, 255, 255); font-size: 13px; line-height: 13px; letter-spacing: 0px; transform: scaleX(0.9474); transform-origin: 0px 50%; left: 1343px; top: 873px;">BUENOS AIRES</span>
<!-- ===== bottom control bar ===== -->
<svg class="a" style="left:44px;top:948px" width="32" height="28" viewBox="44 948 32 28"><path d="M50.6 952.2 H69.2 C71.2 952.2 72.4 953.4 72.4 955.4 V966.2 C72.4 968.2 71.2 969.4 69.2 969.4 H54.6 C52.6 971.4 50.4 972.6 47.6 972.4 C49 971.2 49.8 970 50 968.6 C48.4 968.2 47.6 967.2 47.6 965.4 V955.4 C47.6 953.4 48.8 952.2 50.6 952.2 Z" fill="none" stroke="#fff" stroke-width="1.5" stroke-linejoin="round"></path>
<path d="M58.4 958.6 C57.6 957.6 56.6 957.2 55.6 957.2 C53.8 957.2 52.6 958.6 52.6 960.6 C52.6 962.6 53.8 964 55.6 964 C56.6 964 57.6 963.6 58.4 962.6 M66.8 958.6 C66 957.6 65 957.2 64 957.2 C62.2 957.2 61 958.6 61 960.6 C61 962.6 62.2 964 64 964 C65 964 66 963.6 66.8 962.6" fill="none" stroke="#fff" stroke-width="1.3"></path></svg>
<!-- mute pill -->
<div class="a" style="left:406px;top:932.3px;width:314px;height:60px;border-radius:30px;border:1.3px solid #3b3b3b"></div>
<div class="a" style="left:403.3px;top:930px;width:278.4px;height:65px;border-radius:32.5px 0 0 32.5px;border:1.4px solid #5c9fe6"></div>
<svg class="a" style="left:426px;top:946px" width="32" height="34" viewBox="426 946 32 34"><g fill="none" stroke="#fc8b98" stroke-width="1.55" stroke-linecap="round">
<path d="M438.6 958 V955.4 C438.6 952.4 440.4 950.8 442.8 950.8 C445.4 950.8 447.2 952.6 447.2 955.4 V964.6"></path>
<path d="M447.2 964.6 C447 965.4 446.6 966 446.2 966.4"></path>
<path d="M437.2 961.6 V963.4 C437.2 966.8 439.6 969 442.6 969.2"></path>
<path d="M442.9 969.4 V974.8 M434.4 975 H449.8"></path>
<path d="M430.4 951.6 L453.4 974.2"></path></g></svg>
<span class="t" style="color: rgb(244, 244, 244); -webkit-text-stroke: 0.35px rgb(244, 244, 244); font-size: 24px; line-height: 24px; letter-spacing: -0.115px; left: 470.4px; top: 953.18px;">Desactivar silencio</span>
<svg class="a" style="left:690px;top:957px" width="18" height="12" viewBox="690 957 18 12"><path d="M691.8 960.2 L699.2 967.4 L706.6 960.2" fill="none" stroke="#fff" stroke-width="1.5"></path></svg>
<!-- video pill -->
<div class="a" style="left:739.3px;top:932.3px;width:263.4px;height:60px;border-radius:30px;border:1.3px solid #3b3b3b"></div>
<svg class="a" style="left:768px;top:946px" width="34" height="34" viewBox="768 946 34 34"><g fill="none" stroke="#fc8b98" stroke-width="1.55" stroke-linecap="round" stroke-linejoin="round">
<path d="M778.6 953.4 H787.6 C790.2 953.4 791.8 955 791.8 957.4 V966.4 M789.2 972.4 H776.8 C774.2 972.4 772.6 970.8 772.6 968.4 V956.4"></path>
<path d="M792.3 959.6 L796.4 957 C796.8 956.8 797.1 957 797.1 957.4 V968 C797.1 968.4 796.8 968.6 796.4 968.4 L792.3 965.8 Z"></path>
<path d="M773.4 951.6 L796.4 974.2"></path></g></svg>
<span class="t" style="color: rgb(244, 244, 244); -webkit-text-stroke: 0.35px rgb(244, 244, 244); font-size: 24px; line-height: 24px; letter-spacing: 0.099px; left: 812.8px; top: 953.18px;">Iniciar vídeo</span>
<svg class="a" style="left:972px;top:957px" width="20" height="12" viewBox="972 957 20 12"><path d="M974.2 960.2 L981.6 967.4 L989 960.2" fill="none" stroke="#fff" stroke-width="1.5"></path></svg>
<!-- share pill -->
<div class="a" style="left:1021px;top:933.3px;width:188.6px;height:59px;border-radius:29.5px;border:1.3px solid #3b3b3b"></div>
<svg class="a" style="left:1036px;top:951px" width="30" height="26" viewBox="1036 951 30 26"><rect x="1038.8" y="954.4" width="24.6" height="18.4" rx="3" fill="none" stroke="#fff" stroke-width="1.5"></rect><path d="M1051.1 968.6 V958.8 M1047.4 962.4 L1051.1 958.6 L1054.8 962.4" fill="none" stroke="#fff" stroke-width="1.5"></path></svg>
<span class="t" style="color: rgb(246, 246, 246); -webkit-text-stroke: 0.55px rgb(246, 246, 246); font-size: 24px; line-height: 24px; letter-spacing: 0.555px; left: 1078.6px; top: 953.18px;">Compartir</span>
<!-- hand / emoji pill -->
<div class="a" style="left:1228.3px;top:933.3px;width:125.6px;height:59px;border-radius:29.5px;border:1.3px solid #3b3b3b"></div>
<svg class="a" style="left:1246px;top:946px" width="24" height="34" viewBox="1246 946 24 34"><g fill="none" stroke="#fff" stroke-width="1.5" stroke-linecap="round" stroke-linejoin="round">
<path d="M1251 960.6 V954.6 C1251 953.4 1251.8 952.8 1252.6 952.8 C1253.6 952.8 1254.2 953.4 1254.2 954.6 V960 M1254.2 956 V952.6 C1254.2 951.4 1255 950.8 1256 950.8 C1257 950.8 1257.8 951.4 1257.8 952.6 V960 M1257.8 953.6 C1257.8 952.4 1258.6 951.8 1259.4 951.8 C1260.4 951.8 1261.2 952.4 1261.2 953.6 V960 M1261.2 955.6 C1261.2 954.6 1261.8 954 1262.8 954 C1263.6 954 1264.2 954.6 1264.2 955.6 V962.4"></path>
<path d="M1251 960.6 V967.6 C1251 972 1254 975 1258.2 975 C1262.4 975 1265.4 972 1265.4 967.6 V960.6 C1265.4 959.6 1264.8 959 1264 959 C1262.6 959.4 1261.6 961.6 1261 964 C1259.6 964.8 1258.2 966.6 1257.6 969.6"></path></g></svg>
<div class="a" style="left:1290.8px;top:946px;width:1.3px;height:33px;background:#3b3b3b"></div>
<svg class="a" style="left:1308px;top:946px" width="32" height="32" viewBox="1308 946 32 32"><g fill="none" stroke="#fff" stroke-width="1.5" stroke-linecap="round">
<path d="M1327.8 950.8 C1321 948.8 1313.4 953 1311.6 960 C1310 967 1314.4 973.8 1321.4 975.3 C1328.4 976.8 1335.2 972.4 1336.6 965.4 C1337 963.6 1337 961.8 1336.6 960.2"></path>
<path d="M1332.4 950.4 V958.8 M1328.2 954.6 H1336.6"></path>
<path d="M1317.6 966 C1318.6 968.4 1321.2 970 1324 970 C1326.8 970 1329.4 968.4 1330.4 966"></path></g>
<circle cx="1319.8" cy="960.6" r="1.4" fill="#fff"></circle><circle cx="1328.4" cy="960.6" r="1.4" fill="#fff"></circle></svg>
<!-- more -->
<div class="a" style="left:1372.6px;top:933.3px;width:59px;height:59px;border-radius:50%;border:1.3px solid #3b3b3b"></div>
<div class="a" style="left:1394px;top:961.8px;width:2.2px;height:2.2px;background:#fff;border-radius:50%;box-shadow:6.8px 0 0 #fff,13.6px 0 0 #fff"></div>
<!-- leave -->
<div class="a" style="left:1450px;top:933.3px;width:59px;height:59px;border-radius:50%;background:#dc2131"></div>
<svg class="a" style="left:1468px;top:951px" width="24" height="24" viewBox="1468 951 24 24"><path d="M1471.2 954.4 L1488 971.2 M1488 954.4 L1471.2 971.2" fill="none" stroke="#fff" stroke-width="1.8" stroke-linecap="round"></path></svg>
<!-- right icons -->
<svg class="a" style="left:1696px;top:946px" width="34" height="34" viewBox="1696 946 34 34"><g fill="none" stroke="#fff" stroke-width="1.5" stroke-linecap="round">
<circle cx="1711" cy="956" r="5.4"></circle>
<path d="M1706.6 960.6 C1702.6 962.8 1700.6 966.6 1700.8 971 C1700.8 973.6 1704 975.2 1712 975.4"></path>
<path d="M1715.2 960.6 C1716.4 961.2 1717.4 962 1718.2 963"></path>
<path d="M1715.6 966.6 H1725.8 M1715.6 970.6 H1725.8 M1715.6 974.6 H1725.8" stroke-width="1.7"></path></g></svg>
<svg class="a" style="left:1774px;top:948px" width="34" height="32" viewBox="1774 948 34 32"><path d="M1790.6 951.6 C1797.2 951.6 1802.4 956.6 1802.4 963 C1802.4 969.4 1797.2 974.4 1790.6 974.4 C1788.6 974.4 1786.8 974 1785.2 973.2 L1778.6 974.6 C1780.2 973 1781 971.6 1781.4 970 C1779.8 968 1778.8 965.6 1778.8 963 C1778.8 956.6 1784 951.6 1790.6 951.6 Z" fill="none" stroke="#fff" stroke-width="1.5" stroke-linejoin="round"></path></svg>
<div class="a" style="left:1807.4px;top:931.4px;width:15.2px;height:15.2px;border-radius:50%;background:#5ab0f2"></div>
<div class="a" style="left:1862.4px;top:961.8px;width:2px;height:2px;background:#fff;border-radius:50%;box-shadow:6px 0 0 #fff,12px 0 0 #fff"></div>
<!-- ===== windows taskbar ===== -->
<div class="a" style="left:0;top:1007px;width:1920px;height:80px;background:
radial-gradient(ellipse 300px 70px at 1900px 1010px,rgba(240,246,240,.8),rgba(240,246,240,0) 100%),
radial-gradient(ellipse 500px 90px at 560px 1085px,rgba(208,236,210,.9),rgba(208,236,210,0) 100%),
radial-gradient(ellipse 420px 60px at 640px 1005px,rgba(204,226,236,.9),rgba(204,226,236,0) 100%),
radial-gradient(ellipse 300px 80px at 60px 1090px,rgba(206,234,208,.9),rgba(206,234,208,0) 100%),
linear-gradient(90deg,#dde5e2 0,#dfe8e4 12%,#dbe7e6 30%,#e2e7e3 44%,#e5e5e5 55%,#e3e5e2 70%,#dde9da 78%,#d8f0d5 84%,#d9f2d6 100%);background-attachment:fixed"></div>
<!-- start -->
<svg class="a" style="left:710px;top:1027px" width="38" height="38" viewBox="710 1027 38 38"><defs><linearGradient id="wn" x1="0" y1="0" x2="1" y2="1"><stop offset="0" stop-color="#52c8fa"></stop><stop offset=".5" stop-color="#1a9cec"></stop><stop offset="1" stop-color="#0474d2"></stop></linearGradient></defs>
<path d="M713.2 1028.7 H728.2 V1044.9 H711.9 V1030 C711.9 1029.2 712.4 1028.7 713.2 1028.7 Z M730 1028.7 H745 C745.8 1028.7 746.3 1029.2 746.3 1030 V1044.9 H730 Z M711.9 1046.6 H728.2 V1062.8 H713.2 C712.4 1062.8 711.9 1062.3 711.9 1061.5 Z M730 1046.6 H746.3 V1061.5 C746.3 1062.3 745.8 1062.8 745 1062.8 H730 Z" fill="url(#wn)"></path></svg>
<!-- search -->
<svg class="a" style="left:778px;top:1024px" width="38" height="40" viewBox="778 1024 38 40"><circle cx="798" cy="1042.5" r="12.5" fill="rgba(235,242,240,.55)" stroke="#2b2729" stroke-width="3"></circle><path d="M788.6 1051.8 L782 1059.4" stroke="#2b2729" stroke-width="3.6" stroke-linecap="round"></path></svg>
<!-- task view -->
<svg class="a" style="left:842px;top:1026px" width="40" height="38" viewBox="842 1026 40 38"><defs><linearGradient id="tv1" x1="0" y1="0" x2="0" y2="1"><stop offset="0" stop-color="#ffffff"></stop><stop offset="1" stop-color="#e4e4e4"></stop></linearGradient><linearGradient id="tv2" x1="0" y1="0" x2="0" y2="1"><stop offset="0" stop-color="#3a3a3a"></stop><stop offset="1" stop-color="#101010"></stop></linearGradient></defs>
<rect x="844.2" y="1037.8" width="26.7" height="23.7" rx="2" fill="url(#tv2)"></rect><rect x="853" y="1028.7" width="26.4" height="21.9" rx="2" fill="url(#tv1)" opacity=".96"></rect><rect x="853" y="1037.8" width="17.9" height="12.8" fill="#c4c4c4"></rect><rect x="853" y="1037.8" width="17.9" height="12.8" fill="#aaa" opacity=".35"></rect></svg>
<!-- edge -->
<svg class="a" style="left:904px;top:1021px" width="48" height="48" viewBox="0 0 1080 1080"><defs>
<linearGradient id="eg1" x1="0" y1="0" x2=".6" y2="1"><stop offset="0" stop-color="#2ea8ee"></stop><stop offset=".5" stop-color="#1088dc"></stop><stop offset="1" stop-color="#0868c4"></stop></linearGradient>
<linearGradient id="eg2" x1="0" y1=".3" x2="1" y2=".6"><stop offset="0" stop-color="#30b2f2"></stop><stop offset=".45" stop-color="#2ec2cc"></stop><stop offset=".8" stop-color="#52d878"></stop><stop offset="1" stop-color="#66e44a"></stop></linearGradient></defs>
<circle cx="540" cy="538" r="405" fill="url(#eg1)"></circle>
<path d="M136 540 C130 300 320 132 545 132 C770 132 945 300 945 490 C945 600 870 672 770 672 C680 672 610 640 612 600 C640 560 650 500 600 440 C540 370 420 330 300 345 C220 360 150 440 136 540 Z" fill="url(#eg2)"></path>
<path d="M400 500 C330 600 335 770 420 855 C500 935 640 950 740 900 C810 860 860 800 885 730 C800 790 640 800 540 720 C470 660 420 590 400 500 Z" fill="#1458a8"></path>
<path d="M445 560 C445 490 500 452 552 458 C612 468 642 520 626 575 C606 604 615 640 680 665 C740 685 830 684 890 700 C935 706 955 640 948 560 L1010 600 L1000 800 L885 730 C800 790 640 800 540 720 C480 670 445 620 445 560 Z" fill="#e3e8e5"></path>
<path d="M885 730 C860 800 810 860 740 900 C680 930 620 945 560 946 L700 1010 L1010 900 L1010 700 Z" fill="#e3e8e5"></path>
</svg>
<div class="a" style="left:924.1px;top:1069.6px;width:8.8px;height:3.8px;border-radius:2px;background:#858784"></div>
<!-- explorer -->
<svg class="a" style="left:974px;top:1027px" width="40" height="36" viewBox="974 1027 40 36"><defs><linearGradient id="fo" x1="0" y1="0" x2="0" y2="1"><stop offset="0" stop-color="#fdd25a"></stop><stop offset="1" stop-color="#f8b81e"></stop></linearGradient><linearGradient id="fb" x1="0" y1="0" x2="0" y2="1"><stop offset="0" stop-color="#1c92e4"></stop><stop offset="1" stop-color="#0a6cc4"></stop></linearGradient></defs>
<path d="M976 1030.4 C976 1029.6 976.6 1029 977.4 1029 H987.4 C988.2 1029 988.8 1029.3 989.3 1029.9 L991.2 1032 H1010.6 C1011.4 1032 1012.1 1032.6 1012.1 1033.4 V1061.5 H976 Z" fill="#e6a406"></path>
<path d="M976 1036.2 H988 L990.6 1033.2 H1010.6 C1011.4 1033.2 1012.1 1033.8 1012.1 1034.6 V1060.2 C1012.1 1061 1011.4 1061.5 1010.6 1061.5 H977.4 C976.6 1061.5 976 1061 976 1060.2 Z" fill="url(#fo)"></path>
<path d="M981.7 1061.5 V1054.4 C981.7 1052.6 982.9 1051.3 984.7 1051.3 H1003 C1004.8 1051.3 1006 1052.6 1006 1054.4 V1061.5 Z" fill="url(#fb)"></path>
<rect x="986.4" y="1055.4" width="15" height="1.7" rx=".8" fill="#07529c"></rect></svg>
<div class="a" style="left:990px;top:1069.6px;width:9px;height:3.8px;border-radius:2px;background:#858784"></div>
<!-- chrome -->
<svg class="a" style="left:1040px;top:1018px" width="50" height="46" viewBox="1040 1018 50 46"><defs><clipPath id="avc"><circle cx="1074" cy="1031.7" r="11.9"></circle></clipPath></defs>
<circle cx="1059.5" cy="1044.5" r="16.5" fill="#2ba24c"></circle>
<path d="M1059.5 1044.5 L1045.2 1036.25 A16.5 16.5 0 0 1 1073.8 1036.25 Z" fill="#e53b2f"></path>
<path d="M1059.5 1028 A16.5 16.5 0 0 1 1073.8 1036.25 L1059.5 1036.25 Z" fill="#e53b2f"></path>
<path d="M1073.8 1036.25 A16.5 16.5 0 0 1 1059.5 1061 L1066.6 1048.6 L1059.5 1036.25 Z" fill="#fcc41c"></path>
<path d="M1059.5 1061 L1066.8 1048.4 L1059.5 1044.5 Z" fill="#fcc41c"></path>
<path d="M1045.2 1036.25 L1052.3 1048.6 L1059.5 1044.5 Z" fill="#2ba24c"></path>
<circle cx="1059.5" cy="1044.5" r="7.9" fill="#fff"></circle><circle cx="1059.5" cy="1044.5" r="6.2" fill="#3a80ee"></circle>
<g clip-path="url(#avc)"><rect x="1060" y="1018" width="30" height="30" fill="#4d5a3e"></rect><ellipse cx="1066" cy="1026" rx="6" ry="8" fill="#35422c"></ellipse><ellipse cx="1082" cy="1028" rx="6" ry="9" fill="#5f6a44"></ellipse>
<ellipse cx="1074.6" cy="1027.4" rx="2.6" ry="3.2" fill="#c9a088"></ellipse><path d="M1071.4 1026.6 C1071.4 1022.6 1078 1022.6 1078 1026.8 L1078.6 1033 H1070.8 Z" fill="#8a5a3c" opacity=".75"></path><ellipse cx="1074.6" cy="1027.6" rx="2.1" ry="2.8" fill="#d8b09a"></ellipse>
<path d="M1069 1043.6 V1036 C1069 1032.6 1071 1031.4 1074.6 1031.4 C1078.2 1031.4 1080.4 1032.6 1080.4 1036 V1043.6 Z" fill="#e4dfe4"></path><rect x="1072.6" y="1035" width="4.6" height="6" fill="#b9b4c4"></rect></g>
<circle cx="1074" cy="1031.7" r="11.9" fill="none" stroke="rgba(70,70,70,.55)" stroke-width=".8"></circle></svg>
<div class="a" style="left:1055.9px;top:1069.6px;width:9px;height:3.8px;border-radius:2px;background:#858784"></div>
<!-- webex (active) -->
<div class="a" style="left:1103px;top:1017.4px;width:51px;height:56.2px;border-radius:5px;background:#ebecea;box-shadow:0 0 0 .6px rgba(0,0,0,.06)"></div>
<div class="a" style="left:1097.6px;top:1016.6px;width:50.8px;height:57.2px;border-radius:5px;background:#f1f1f1;box-shadow:0 0 1.5px rgba(0,0,0,.28)"></div>
<svg class="a" style="left:1106px;top:1025px" width="40" height="40" viewBox="1106 1025 40 40"><defs>
<linearGradient id="wb" x1="0" y1="0" x2="0" y2="1"><stop offset="0" stop-color="#222"></stop><stop offset="1" stop-color="#050505"></stop></linearGradient>
<linearGradient id="wc1" x1="0" y1="0" x2="0" y2="1"><stop offset="0" stop-color="#12b4e6"></stop><stop offset="1" stop-color="#14c4a8"></stop></linearGradient>
<linearGradient id="wc2" x1="0" y1="1" x2="1" y2="0"><stop offset="0" stop-color="#1f55e8"></stop><stop offset=".6" stop-color="#1f6fd8"></stop><stop offset="1" stop-color="#3fd668"></stop></linearGradient></defs>
<rect x="1107.9" y="1026.9" width="36" height="36.2" rx="8" fill="url(#wb)"></rect>
<use href="#wx" x="1109.9" y="1033.4" width="32.2" height="23.2"></use></svg>
<div class="a" style="left:1114.1px;top:1069px;width:23.7px;height:4.4px;border-radius:2.2px;background:#1b8ba0"></div>
<!-- word -->
<svg class="a" style="left:1172px;top:1027px" width="40" height="36" viewBox="1172 1027 40 36">
<defs><clipPath id="wdc"><rect x="1182.1" y="1029" width="26.8" height="32.2" rx="2"></rect></clipPath></defs>
<g clip-path="url(#wdc)"><rect x="1182" y="1029" width="27" height="8.2" fill="#41a5ee"></rect><rect x="1182" y="1037.1" width="27" height="8.2" fill="#2b7cd3"></rect><rect x="1182" y="1045.2" width="27" height="8.2" fill="#185abd"></rect><rect x="1182" y="1053.3" width="27" height="8.2" fill="#103f91"></rect></g>
<rect x="1174" y="1036.4" width="18.2" height="17.6" rx="1.8" fill="#185abd"></rect>
<path d="M1177.4 1040.4 L1179.9 1050.2 L1183 1041.6 L1186.1 1050.2 L1188.7 1040.4" fill="none" stroke="#fff" stroke-width="1.9" stroke-linejoin="miter"></path></svg>
<div class="a" style="left:1188.2px;top:1069.6px;width:8.8px;height:3.8px;border-radius:2px;background:#858784"></div>
<!-- tray -->
<svg class="a" style="left:1528px;top:1036px" width="22" height="14" viewBox="1528 1036 22 14"><path d="M1530.2 1047.5 L1539 1039 L1547.8 1047.5" fill="none" stroke="#1c1c1c" stroke-width="1.4" stroke-linecap="round" stroke-linejoin="round"></path></svg>
<svg class="a" style="left:1561px;top:1034px" width="28" height="20" viewBox="1561 1034 28 20"><path d="M1568.6 1050.6 C1565.6 1050.6 1563.8 1048.8 1563.8 1046.4 C1563.8 1044 1565.6 1042.4 1567.8 1042.2 C1568.6 1038.8 1571.4 1036.7 1574.8 1036.7 C1577.6 1036.7 1579.8 1038.2 1580.8 1040.4 C1583.6 1040 1586.2 1042.2 1586.2 1045.4 C1586.2 1048.4 1584.2 1050.6 1581.4 1050.6 Z" fill="#9c9c9c" stroke="#1e1e1e" stroke-width="1.3"></path><path d="M1565 1049.6 L1575 1043 L1584 1049.8 Z" fill="#d4d4d4"></path><path d="M1568 1042.4 C1570 1040 1577 1039 1581 1040.6 L1575 1043.4 Z" fill="#767676"></path></svg>
<div class="a" style="left:1593.7px;top:1015px;width:46.9px;height:56.9px;border-radius:5px;background:rgba(240,252,238,.72);box-shadow:0 0 0 .5px rgba(0,0,0,.04)"></div>
<svg class="a" style="left:1602px;top:1029px" width="30" height="30" viewBox="1602 1029 30 30"><g fill="none" stroke="#1c1c1c" stroke-width="1.4" stroke-linecap="round">
<path d="M1612.2 1041.6 V1037 C1612.2 1034.2 1614 1032.6 1616.7 1032.6 C1619.4 1032.6 1621.2 1034.2 1621.2 1037 V1043 C1621.2 1044.4 1620.8 1045.6 1620 1046.4"></path>
<path d="M1609.2 1043.4 C1609.2 1048 1612.4 1051.2 1616.7 1051.2 C1618.4 1051.2 1620 1050.8 1621.2 1049.8 M1624.4 1043.4 C1624.4 1044.6 1624.2 1045.6 1623.8 1046.6"></path>
<path d="M1616.7 1051.4 V1055.4"></path><path d="M1605.8 1032.6 L1628.4 1055.4"></path></g></svg>
<svg class="a" style="left:1651px;top:1032px" width="28" height="22" viewBox="1651 1032 28 22"><g fill="none" stroke="#1c1c1c" stroke-width="1.5" stroke-linecap="round">
<path d="M1654 1041.4 C1660.4 1034.6 1669.8 1034.6 1676.2 1041.4"></path><path d="M1657.4 1044.8 C1661.8 1040.2 1668.4 1040.2 1672.8 1044.8"></path><path d="M1660.8 1047.8 C1663.4 1045.2 1666.8 1045.2 1669.4 1047.8"></path></g><circle cx="1665.1" cy="1050.4" r="1.7" fill="#1c1c1c"></circle></svg>
<svg class="a" style="left:1687px;top:1032px" width="28" height="24" viewBox="1687 1032 28 24"><path d="M1690.2 1040.4 H1693.8 L1698.4 1036.2 V1051.6 L1693.8 1047.4 H1690.2 Z" fill="none" stroke="#1c1c1c" stroke-width="1.4" stroke-linejoin="round"></path><path d="M1701.4 1040.2 C1703.2 1042.4 1703.2 1045.6 1701.4 1047.8" fill="none" stroke="#1c1c1c" stroke-width="1.4" stroke-linecap="round"></path><path d="M1704.6 1037.2 C1707.8 1041 1707.8 1047 1704.6 1050.8" fill="none" stroke="#8e9a8e" stroke-width="1.2" stroke-linecap="round"></path><path d="M1707.8 1034.6 C1712.2 1039.8 1712.2 1048.2 1707.8 1053.4" fill="none" stroke="#b4c2b4" stroke-width="1.1" stroke-linecap="round"></path></svg>
<svg class="a" style="left:1723px;top:1031px" width="28" height="24" viewBox="1723 1031 28 24"><g fill="none" stroke="#1c1c1c" stroke-width="1.4">
<path d="M1733.6 1037.6 H1743.4 C1745 1037.6 1746 1038.6 1746 1040.2 V1047.6 C1746 1049.2 1745 1050.2 1743.4 1050.2 H1731.6"></path><path d="M1746.2 1041.8 H1747.6 C1748.2 1041.8 1748.6 1042.2 1748.6 1042.8 V1045 C1748.6 1045.6 1748.2 1046 1747.6 1046 H1746.2" fill="#1c1c1c"></path>
<path d="M1727.4 1033.6 V1037 M1730.8 1033.6 V1037" stroke-width="1.5" stroke-linecap="round"></path><path d="M1725.8 1037.2 H1732.4 V1040.4 C1732.4 1042 1731 1043.2 1729.1 1043.2 C1727.2 1043.2 1725.8 1042 1725.8 1040.4 Z" fill="#1c1c1c"></path><path d="M1729.1 1043 V1051.2" stroke-width="1.5"></path></g>
<path d="M1731.8 1048.4 V1044.4 H1734 V1040 H1740 V1048.4 Z" fill="#1c1c1c"></path></svg>
<span class="t" style="color: rgb(27, 27, 27); font-size: 16.6px; line-height: 16.6px; letter-spacing: -0.558px; left: 1816.5px; top: 1024.75px;">10:23</span>
<span class="t" style="color: rgb(27, 27, 27); font-size: 16.6px; line-height: 16.6px; letter-spacing: 0.219px; left: 1772px; top: 1047.75px;">11/10/2022</span>
<div class="a" style="left:1867.1px;top:1031.9px;width:23.8px;height:23.8px;border-radius:50%;background:#22849a"></div>
<span class="t" style="color: rgb(255, 255, 255); font-size: 15px; line-height: 15px; letter-spacing: 0px; left: 1874.83px; top: 1036.9px;">2</span>

</body></html>
